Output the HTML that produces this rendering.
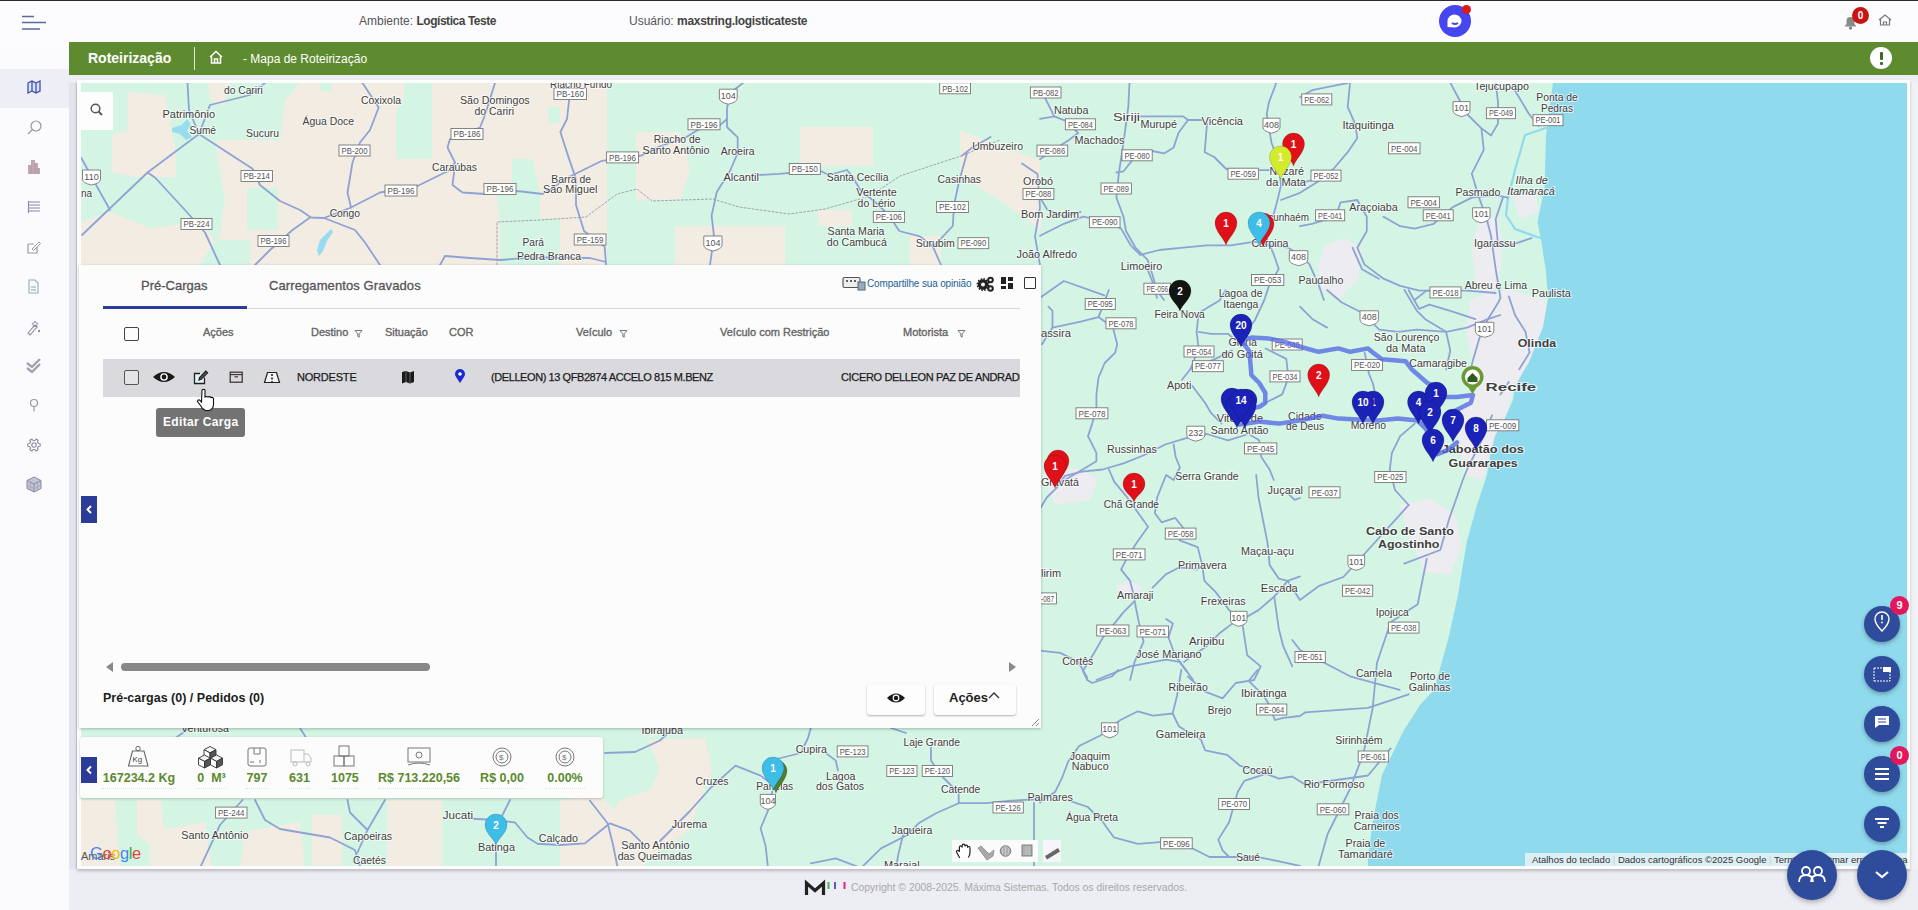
<!DOCTYPE html><html><head><meta charset="utf-8"><title>Mapa de Roteirização</title><style>
*{box-sizing:border-box;margin:0;padding:0}
html,body{width:1918px;height:910px;overflow:hidden;background:#f1f1f6;font-family:"Liberation Sans",sans-serif;position:relative}
.a{position:absolute}
.t{position:absolute;white-space:nowrap}
#top{left:0;top:0;width:1918px;height:42px;background:#fcfcfe;border-top:1px solid #2a2a33}
#side{left:0;top:42px;width:69px;height:868px;background:#fbfbfd}
#sideb{left:69px;top:75px;width:9px;height:835px;background:#e4e4ec}
#green{left:69px;top:42px;width:1849px;height:33px;background:#5f8b30}
#gap{left:69px;top:75px;width:1849px;height:8px;background:#eeedf4}
#mapframe{left:77px;top:80px;width:1833px;height:789px;background:#fdfdfd;box-shadow:0 2px 3px rgba(0,0,0,.22)}
#footer{left:69px;top:869px;width:1849px;height:41px;background:#ededf4}
svg{position:absolute;overflow:visible}
.lbl{font-family:"Liberation Sans",sans-serif;font-size:11.5px;fill:#404040;paint-order:stroke;stroke:#ffffffb0;stroke-width:2px}
.shd{font-family:"Liberation Sans",sans-serif;font-size:9px;fill:#555}
.pin{font-family:"Liberation Sans",sans-serif;font-size:10px;font-weight:bold;fill:#fff}
</style></head><body>
<div id="top" class="a">
<svg style="left:20px;top:0px" width="30" height="32"><path d="M2 15.5h12M2 21.5h24M2 28h18" stroke="#5a6a99" stroke-width="1.4" fill="none"/></svg>
<div class="t" style="left:359px;top:13px;font-size:12px;color:#555">Ambiente: <b style="color:#444;letter-spacing:-0.45px">Logística Teste</b></div>
<div class="t" style="left:629px;top:13px;font-size:12px;color:#555">Usuário: <b style="color:#444;letter-spacing:-0.3px">maxstring.logisticateste</b></div>
<div class="a" style="left:1439px;top:4px;width:32px;height:32px;border-radius:50%;background:#4646ee"></div>
<svg style="left:1446px;top:12px" width="18" height="16"><path d="M1.5 14 V8 a7 6.5 0 1 1 7 6.5 Z" fill="#fff"/><path d="M6 10 q3 2 6 0" stroke="#4646ee" stroke-width="2" fill="none"/></svg>
<div class="a" style="left:1462px;top:4px;width:9px;height:9px;border-radius:50%;background:#dd1a1a"></div>
<svg style="left:1843px;top:13px" width="16" height="16"><path d="M1.5 12.5 L3.5 10 V7 a4 4 0 0 1 8 0 V10 L13.5 12.5Z" fill="#8a8a8a"/><circle cx="7.5" cy="14" r="1.6" fill="#777"/></svg>
<div class="a" style="left:1852px;top:6px;width:17px;height:17px;border-radius:50%;background:#c81414;color:#fff;font-size:10px;font-weight:bold;text-align:center;line-height:17px">0</div>
<svg style="left:1878px;top:13px" width="14" height="12"><path d="M1 6 L7 1 L13 6 M2.5 5 V11 H11.5 V5 M5.5 11 V8 H8.5 V11" stroke="#777" stroke-width="1.2" fill="none"/></svg>
</div>
<div id="side" class="a"></div><div class="a" style="left:0;top:69px;width:69px;height:39px;background:#eeeef6"></div>
<div id="sideb" class="a"></div><div class="a" style="left:76px;top:83px;width:1px;height:827px;background:#d0d0dc"></div>
<svg style="left:0;top:0" width="69" height="520"><path d="M28 83 l4 -2 l4 2 l4 -2 v10 l-4 2 l-4 -2 l-4 2z M32 81 v10 M36 83 v10" stroke="#4b4bb0" stroke-width="1.3" fill="#cfe8f6"/><circle cx="36" cy="126" r="5" stroke="#9a9a9a" stroke-width="1.2" fill="none"/><path d="M32.5 129.5 L28 134" stroke="#9a9a9a" stroke-width="1.3"/><path d="M28 174 v-9 h3 v-5 h4 v3 h3 v5 h2 v6z" fill="#bfa8b0"/><path d="M31 165v9M35 163v11M38 168v6" stroke="#a89098" stroke-width="0.6"/><path d="M28 202h12M28 205h12M28 208h12M28 211h12M28.5 201v12" stroke="#8888aa" stroke-width="1.1"/><path d="M28 244 h6 M28 244 v9 h9 v-6" stroke="#9a9aaa" stroke-width="1.2" fill="none"/><path d="M32 249 l7 -7 l1.5 1.5 l-7 7z" stroke="#9a9aaa" stroke-width="1" fill="none"/><path d="M29 280 h6 l3 3 v10 h-9z" stroke="#9aaab0" stroke-width="1.1" fill="none"/><path d="M31 287 h5 M31 290 h5" stroke="#7ab" stroke-width="1"/><path d="M28 333 l7 -8 l2 2 l-7 8z" stroke="#8a8aa0" stroke-width="1.1" fill="none"/><path d="M35 321 l1 2 l2 0.5 l-1.5 1.5 l0.3 2 l-1.8 -1 l-1.8 1 l0.3 -2 l-1.5 -1.5 l2 -0.5z" stroke="#8a8aa0" stroke-width="0.9" fill="none"/><circle cx="39" cy="331" r="1.2" fill="#a08aa0"/><path d="M27 363 l5 4 l8 -8 M27 368 l5 4 l8 -8" stroke="#a0a0b0" stroke-width="2.4" fill="none"/><circle cx="34" cy="403" r="3.5" stroke="#999" stroke-width="1.2" fill="none"/><path d="M34 406.5 v5" stroke="#999" stroke-width="1.2"/><path d="M38.37 443.55 L40.17 443.75 L40.17 446.25 L38.37 446.45 L37.44 448.06 L38.17 449.72 L36.00 450.97 L34.93 449.50 L33.07 449.50 L32.00 450.97 L29.83 449.72 L30.56 448.06 L29.63 446.45 L27.83 446.25 L27.83 443.75 L29.63 443.55 L30.56 441.94 L29.83 440.28 L32.00 439.03 L33.07 440.50 L34.93 440.50 L36.00 439.03 L38.17 440.28 L37.44 441.94Z" stroke="#8a8aa0" stroke-width="1.1" fill="none" stroke-linejoin="round"/><circle cx="34" cy="445" r="2.2" stroke="#8a8aa0" stroke-width="1.1" fill="none"/><path d="M34 477 l7 3.5 v8 l-7 3.5 l-7 -3.5 v-8z" fill="#c4c4d4" stroke="#8888a4" stroke-width="1"/><path d="M27 480.5 l7 3.5 l7 -3.5 M34 484 v8" stroke="#8888a4" stroke-width="1" fill="none"/><path d="M30.5 482.3v8M37.5 482.3v8M27 485l7 3.5l7 -3.5" stroke="#9a9ab4" stroke-width="0.6" fill="none"/></svg>
<div id="green" class="a">
<div class="t" style="left:19px;top:8px;font-size:14px;font-weight:bold;color:#fff">Roteirização</div>
<div class="a" style="left:125px;top:5px;width:1px;height:23px;background:#dfe8d0"></div>
<svg style="left:140px;top:8px" width="14" height="14"><path d="M1 7 L7 1.5 L13 7 M2.5 6 V13 H11.5 V6 M5.5 13 V9 H8.5 V13" stroke="#fff" stroke-width="1.5" fill="none"/></svg>
<div class="t" style="left:174px;top:10px;font-size:12px;color:#fff">- Mapa de Roteirização</div>
<div class="a" style="left:1801px;top:5px;width:22px;height:22px;border-radius:50%;background:#fff"></div>
<div class="a" style="left:1810.5px;top:10px;width:3px;height:8px;background:#3c6a2a;border-radius:1px"></div>
<div class="a" style="left:1810.5px;top:19.5px;width:3px;height:3px;background:#3c6a2a;border-radius:1px"></div>
</div>
<div id="gap" class="a"></div><div id="footer" class="a"></div><div id="mapframe" class="a"></div>
<div class="a" style="left:81px;top:83px;width:1826px;height:783px;overflow:hidden">
<svg style="left:0;top:0" width="1826" height="783" viewBox="81 83 1826 783"><rect x="81" y="83" width="1826" height="783" fill="#d4f5e4"/><path d="M81 800 L115 800 L120 868 L81 868 Z" fill="#f3ece2" /><path d="M137 800 L160 800 L165 830 L150 845 L137 835 Z" fill="#f3ece2" /><path d="M150 832 L205 822 L212 868 L150 868 Z" fill="#f3ece2" /><path d="M245 832 L300 822 L305 868 L240 868 Z" fill="#f3ece2" /><path d="M312 815 L342 815 L342 865 L312 865 Z" fill="#f3ece2" /><path d="M387 800 L442 800 L442 868 L387 868 Z" fill="#f3ece2" /><path d="M648 740 L705 738 L712 770 L700 800 L690 830 L660 850 L640 868 L610 868 L600 830 L620 800 L650 790 L660 770 Z" fill="#f3ece2" /><path d="M560 800 L600 796 L625 820 L635 868 L560 868 Z" fill="#f3ece2" /><path d="M128 92 L165 95 L176 150 L176 177 L134 177 L112 173 L112 135 L128 130 Z" fill="#f3ece2" /><path d="M81 222 L110 212 L150 228 L200 222 L215 240 L200 265 L81 265 Z" fill="#f3ece2" /><path d="M208 83 L280 83 L275 105 L230 108 L210 100 Z" fill="#f3ece2" /><path d="M215 140 L280 140 L285 100 L300 83 L607 83 L607 265 L215 265 L225 200 Z" fill="#f3ece2" /><path d="M636 132 L680 132 L690 170 L680 200 L636 200 Z" fill="#f3ece2" /><path d="M675 226 L785 226 L785 265 L675 265 Z" fill="#f3ece2" /><path d="M800 127 L873 127 L873 166 L800 166 Z" fill="#f3ece2" /><path d="M818 210 L852 210 L852 226 L818 226 Z" fill="#f3ece2" /><path d="M910 236 L941 236 L941 265 L910 265 Z" fill="#f3ece2" /><path d="M960 130 L1010 150 L1040 160 L1041 230 L1000 200 L960 175 Z" fill="#f3ece2" /><path d="M404 83 L432 83 L432 159 L396 159 L396 109 L404 101 Z" fill="#d4f5e4" /><path d="M548 107 L560 107 L560 123 L548 123 Z" fill="#d4f5e4" /><path d="M512 159 L532 159 L540 191 L540 219 L560 219 L560 265 L500 265 L500 223 L496 191 L512 191 Z" fill="#d4f5e4" /><path d="M320 83 L332 83 L332 91 L320 91 Z" fill="#d4f5e4" /><path d="M247 188 L278 188 L278 230 L247 230 Z" fill="#d4f5e4" /><path d="M216 240 L250 240 L250 265 L216 265 Z" fill="#d4f5e4" /><path d="M230 83 L300 83 L285 100 L280 140 L215 140 Z" fill="#d4f5e4" /><path d="M1470 300 L1490 292 L1510 290 L1546 300 L1546 321 L1544 342 L1534 359 L1525 373 L1515 384 L1509 405 L1507 419 L1500 436 L1492 457 L1482 480 L1465 475 L1458 440 L1462 410 L1470 395 L1472 360 L1466 330 Z" fill="#ececf1" /><path d="M1325 245 L1345 238 L1362 250 L1358 280 L1340 298 L1322 290 L1318 265 Z" fill="#ececf1" /><path d="M1478 225 L1496 215 L1503 240 L1500 275 L1490 298 L1476 285 L1472 250 Z" fill="#ececf1" /><path d="M1512 195 L1535 192 L1538 212 L1520 218 Z" fill="#ececf1" /><path d="M1400 505 L1430 498 L1455 515 L1462 545 L1450 575 L1425 572 L1410 540 Z" fill="#ececf1" /><path d="M1042 472 L1075 468 L1098 478 L1090 500 L1055 505 Z" fill="#ececf1" /><path d="M1116 585 L1130 581 L1143 587 L1138 595 L1118 595 Z" fill="#ececf1" /><path d="M1553 83 L1546 135 L1544.5 188 L1537.5 222 L1541 240 L1546 271 L1548 299 L1543 327 L1529 362 L1515 386 L1513 400 L1504 420 L1495 436 L1490 455 L1487 475 L1477 505 L1467 541 L1462 570 L1458 595 L1448 640 L1434 690 L1420 705 L1404 730 L1382 775 L1373 820 L1368 857 L1368 866 L1907 866 L1907 83 Z" fill="#90daee" /><path d="M1546 128 L1525 135 L1515 170 L1508 198 L1506 215 L1515 229 L1540 238" fill="none" stroke="#90daee" stroke-width="2.2" stroke-linejoin="round" stroke-linecap="round" /><path d="M82 235 L147.5 172.5 L199 134" fill="none" stroke="#8ea3d4" stroke-width="1.8" stroke-linejoin="round" stroke-linecap="round" /><path d="M199 134 L252.5 168.7 L260 185 L280 201 L300 210 L311 217.5 L324 218 L351 207.5" fill="none" stroke="#8ea3d4" stroke-width="1.8" stroke-linejoin="round" stroke-linecap="round" /><path d="M147.5 172.5 L155 177.5 L185 210 L205 232.5 L220 265" fill="none" stroke="#8ea3d4" stroke-width="1.8" stroke-linejoin="round" stroke-linecap="round" /><path d="M81 157.5 L97.5 187.5 L110 210" fill="none" stroke="#8ea3d4" stroke-width="1.8" stroke-linejoin="round" stroke-linecap="round" /><path d="M187.5 83 L189 110 L199 134" fill="none" stroke="#8ea3d4" stroke-width="1.8" stroke-linejoin="round" stroke-linecap="round" /><path d="M199 134 L210 105 L230 100 L250 95 L265 83" fill="none" stroke="#8ea3d4" stroke-width="1.8" stroke-linejoin="round" stroke-linecap="round" /><path d="M362.5 83 L378.7 107.5 L370 130 L360 142.5 L352.5 162.5 L347.5 192.5 L351 207.5" fill="none" stroke="#8ea3d4" stroke-width="1.8" stroke-linejoin="round" stroke-linecap="round" /><path d="M351 207.5 L380 192.5 L417.5 186 L450 170 L455 162.5" fill="none" stroke="#8ea3d4" stroke-width="1.8" stroke-linejoin="round" stroke-linecap="round" /><path d="M455 162.5 L447.5 147.5 L450 139 L480 127.5 L485 115 L495 83" fill="none" stroke="#8ea3d4" stroke-width="1.8" stroke-linejoin="round" stroke-linecap="round" /><path d="M455 165 L452.5 185 L462.5 192.5 L485 194 L517.5 191 L542.5 194 L570 176.5" fill="none" stroke="#8ea3d4" stroke-width="1.8" stroke-linejoin="round" stroke-linecap="round" /><path d="M324 218 L355 230 L365 242.5 L380 265" fill="none" stroke="#8ea3d4" stroke-width="1.8" stroke-linejoin="round" stroke-linecap="round" /><path d="M310 217.5 L292.5 230 L270 250 L255 265" fill="none" stroke="#8ea3d4" stroke-width="1.8" stroke-linejoin="round" stroke-linecap="round" /><path d="M440 265 L445 256 L470 258 L500 260 L517.5 258.7 L542.5 257.5 L590 258 L606 262" fill="none" stroke="#8ea3d4" stroke-width="1.8" stroke-linejoin="round" stroke-linecap="round" /><path d="M571 83 L567 119 L560.4 132 L568 155.6 L576 179 L576 205 L584 231 L604.7 246.8 L606 265" fill="none" stroke="#8ea3d4" stroke-width="1.8" stroke-linejoin="round" stroke-linecap="round" /><path d="M570 176.5 L602 160.8 L641 155.6 L659.5 146.5 L685.6 137.4 L698.6 129.5 L719.5 125.6 L727 119" fill="none" stroke="#8ea3d4" stroke-width="1.8" stroke-linejoin="round" stroke-linecap="round" /><path d="M743 83 L730 93 L727 108.7 L727 127 L737.7 137.4 L737.7 153 L730 171 L716.8 192 L711.6 215.6 L714 236.4 L710 265" fill="none" stroke="#8ea3d4" stroke-width="1.8" stroke-linejoin="round" stroke-linecap="round" /><path d="M758.5 175 L779.4 173.8 L818.5 170 L829 175 L847 170 L852.4 176.5 L860 189.5 L878.5 205 L889 215.6 L899.3 231 L920 236.4 L933 246.8 L941 265" fill="none" stroke="#8ea3d4" stroke-width="1.8" stroke-linejoin="round" stroke-linecap="round" /><path d="M967 153 L959 181.7 L954 205 L952.8 226 L933 246.8" fill="none" stroke="#8ea3d4" stroke-width="1.8" stroke-linejoin="round" stroke-linecap="round" /><path d="M962 155.6 L972 147.8 L990.6 137" fill="none" stroke="#8ea3d4" stroke-width="1.8" stroke-linejoin="round" stroke-linecap="round" /><path d="M1022 163.4 L1037.5 174 L1040 207.7 L1035 236.4 L1040 265" fill="none" stroke="#8ea3d4" stroke-width="1.8" stroke-linejoin="round" stroke-linecap="round" /><path d="M242.5 800 L220 825 L200 868" fill="none" stroke="#8ea3d4" stroke-width="1.8" stroke-linejoin="round" stroke-linecap="round" /><path d="M255 800 L265 820 L280 829 L330 837.5 L355 850 L360 866" fill="none" stroke="#8ea3d4" stroke-width="1.8" stroke-linejoin="round" stroke-linecap="round" /><path d="M347.5 800 L350 812.5 L367.5 830 L385 800" fill="none" stroke="#8ea3d4" stroke-width="1.8" stroke-linejoin="round" stroke-linecap="round" /><path d="M367.5 830 L357.5 852.5" fill="none" stroke="#8ea3d4" stroke-width="1.8" stroke-linejoin="round" stroke-linecap="round" /><path d="M510 800 L502.5 815" fill="none" stroke="#8ea3d4" stroke-width="1.8" stroke-linejoin="round" stroke-linecap="round" /><path d="M472.5 818.75 L496 820 L515 822.5 L527.5 837.5 L537.5 843.75 L560 845 L585 843.3 L610 823.3 L630 830.8 L645 845.8" fill="none" stroke="#8ea3d4" stroke-width="1.8" stroke-linejoin="round" stroke-linecap="round" /><path d="M496 845 L496 868" fill="none" stroke="#8ea3d4" stroke-width="1.8" stroke-linejoin="round" stroke-linecap="round" /><path d="M81 780 L120 760 L165 745 L190 728" fill="none" stroke="#8ea3d4" stroke-width="1.8" stroke-linejoin="round" stroke-linecap="round" /><path d="M300 728 L320 760 L345 790" fill="none" stroke="#8ea3d4" stroke-width="1.8" stroke-linejoin="round" stroke-linecap="round" /><path d="M605 753 L635 752 L660 740.5 L673 728" fill="none" stroke="#8ea3d4" stroke-width="1.8" stroke-linejoin="round" stroke-linecap="round" /><path d="M660 841 L690 811 L710.5 788 L735.5 765.6 L760.6 775.6 L773 785" fill="none" stroke="#8ea3d4" stroke-width="1.8" stroke-linejoin="round" stroke-linecap="round" /><path d="M773 760 L780.7 758 L800.7 753 L808 738 L810.8 728" fill="none" stroke="#8ea3d4" stroke-width="1.8" stroke-linejoin="round" stroke-linecap="round" /><path d="M825.8 753 L835.8 760.6 L838 770.6" fill="none" stroke="#8ea3d4" stroke-width="1.8" stroke-linejoin="round" stroke-linecap="round" /><path d="M773 788 L768 810.7 L760.6 828.3 L765.6 845.8 L768 868" fill="none" stroke="#8ea3d4" stroke-width="1.8" stroke-linejoin="round" stroke-linecap="round" /><path d="M590 800.7 L607.6 823.3 L612.7 843.3 L617.7 868" fill="none" stroke="#8ea3d4" stroke-width="1.8" stroke-linejoin="round" stroke-linecap="round" /><path d="M861 868 L881 848.4 L906 835.8 L918.6 823.3 L936 813.3 L958.7 803.2 L986.3 803.2 L1011.3 800.7 L1041 799" fill="none" stroke="#8ea3d4" stroke-width="1.8" stroke-linejoin="round" stroke-linecap="round" /><path d="M958.7 803 L958.7 793 L943.6 778 L936 768 L931 760.6 L931 748" fill="none" stroke="#8ea3d4" stroke-width="1.8" stroke-linejoin="round" stroke-linecap="round" /><path d="M1034 803 L1034 868" fill="none" stroke="#8ea3d4" stroke-width="1.8" stroke-linejoin="round" stroke-linecap="round" /><path d="M891 728 L906 733" fill="none" stroke="#8ea3d4" stroke-width="1.8" stroke-linejoin="round" stroke-linecap="round" /><path d="M810.8 863.4 L835.8 858.4 L861 868" fill="none" stroke="#8ea3d4" stroke-width="1.8" stroke-linejoin="round" stroke-linecap="round" /><path d="M903.5 833.3 L898.5 853.4 L896 868" fill="none" stroke="#8ea3d4" stroke-width="1.8" stroke-linejoin="round" stroke-linecap="round" /><path d="M1129.5 83 L1128.3 106.9 L1123.5 142.7 L1118.8 173.7 L1116.4 197.6 L1123.5 216.7 L1126 231 L1135.5 247.7 L1147.4 259.6 L1152.2 274 L1157 290.6 L1164 300" fill="none" stroke="#8ea3d4" stroke-width="1.8" stroke-linejoin="round" stroke-linecap="round" /><path d="M1135.5 116.4 L1183.2 116.4 L1188 120 L1202.3 120" fill="none" stroke="#8ea3d4" stroke-width="1.8" stroke-linejoin="round" stroke-linecap="round" /><path d="M1188 120 L1178.4 133 L1173.7 147.4 L1164 153.4 L1152.2 151 L1123.5 151" fill="none" stroke="#8ea3d4" stroke-width="1.8" stroke-linejoin="round" stroke-linecap="round" /><path d="M1133 159.4 L1123.5 171.3 L1116.4 172.5" fill="none" stroke="#8ea3d4" stroke-width="1.8" stroke-linejoin="round" stroke-linecap="round" /><path d="M1207 123.6 L1204.7 152.2 L1214.2 157 L1226.2 169 L1254.8 170.1 L1269 170.1" fill="none" stroke="#8ea3d4" stroke-width="1.8" stroke-linejoin="round" stroke-linecap="round" /><path d="M1276.3 83 L1269 102 L1266.7 114 L1271.5 142.7 L1278.7 161.8 L1281 185.6 L1276.3 204.7 L1271.5 221.4 L1266.7 238 L1273.9 254.8 L1278.7 269 L1269 285.9 L1264.3 300 L1255 320 L1240 340" fill="none" stroke="#8ea3d4" stroke-width="1.8" stroke-linejoin="round" stroke-linecap="round" /><path d="M1281 200 L1300 192.8 L1319 180.9" fill="none" stroke="#8ea3d4" stroke-width="1.8" stroke-linejoin="round" stroke-linecap="round" /><path d="M1140.2 254.8 L1159.3 250 L1183.2 247.7 L1207 245.3 L1231 245.3 L1254.8 241.7 L1269 245.3 L1288.2 247.7 L1300 254.8 L1309.5 264.4 L1319 285.9 L1323.9 300" fill="none" stroke="#8ea3d4" stroke-width="1.8" stroke-linejoin="round" stroke-linecap="round" /><path d="M1040 235.7 L1063.9 223.8 L1083 216.7 L1106.8 221.4 L1121.1 228.6 L1130.7 245.3 L1140.2 254.8" fill="none" stroke="#8ea3d4" stroke-width="1.8" stroke-linejoin="round" stroke-linecap="round" /><path d="M1040 118.8 L1054.3 116.4 L1066.3 121.2 L1078.2 133 L1068.6 140.3 L1049.5 152.2 L1040 159.4" fill="none" stroke="#8ea3d4" stroke-width="1.8" stroke-linejoin="round" stroke-linecap="round" /><path d="M1044.8 97.3 L1049.5 106.9 L1054.3 116.4" fill="none" stroke="#8ea3d4" stroke-width="1.8" stroke-linejoin="round" stroke-linecap="round" /><path d="M1040 197.6 L1047.2 209.5 L1063.9 216.7 L1080.6 211.9" fill="none" stroke="#8ea3d4" stroke-width="1.8" stroke-linejoin="round" stroke-linecap="round" /><path d="M1147.4 269.2 L1152.2 281 L1157 297.8" fill="none" stroke="#8ea3d4" stroke-width="1.8" stroke-linejoin="round" stroke-linecap="round" /><path d="M1040 297.8 L1063.9 281 L1104.4 295.4" fill="none" stroke="#8ea3d4" stroke-width="1.8" stroke-linejoin="round" stroke-linecap="round" /><path d="M1350 83 L1347.7 106.9 L1355 123.6 L1357.3 137.9 L1347.7 152.2 L1333.4 169 L1319 178.5 L1300 183.2" fill="none" stroke="#8ea3d4" stroke-width="1.8" stroke-linejoin="round" stroke-linecap="round" /><path d="M1300 97.3 L1312 90.2 L1335.8 85.4 L1347.7 83" fill="none" stroke="#8ea3d4" stroke-width="1.8" stroke-linejoin="round" stroke-linecap="round" /><path d="M1300 226.2 L1312 223.8 L1335.8 216.7 L1340.6 202.3 L1357.3 200 L1366.8 216.7 L1366.8 231 L1357.3 247.7 L1364.4 264.4 L1383.5 278.7 L1400.2 285.9 L1419.3 290.6 L1433.7 290.6" fill="none" stroke="#8ea3d4" stroke-width="1.8" stroke-linejoin="round" stroke-linecap="round" /><path d="M1383.5 216.7 L1400.2 226.2 L1414.6 228.6 L1433.7 223.8 L1452.7 207.1 L1471.8 197.6 L1495.7 195.2 L1507.6 197.6" fill="none" stroke="#8ea3d4" stroke-width="1.8" stroke-linejoin="round" stroke-linecap="round" /><path d="M1450.4 83 L1467 114 L1481.4 128.3 L1483.8 149.8 L1471.8 173.7 L1479 197.6 L1486.2 216.7 L1491 235.7 L1495.7 269.2 L1500.5 297.8 L1498.3 302.5 L1487.9 319.2 L1479.5 338 L1473.3 358.9 L1467 384" fill="none" stroke="#8ea3d4" stroke-width="1.8" stroke-linejoin="round" stroke-linecap="round" /><path d="M1495.7 83 L1498 102 L1498 123.6 L1491 135.5 L1481.4 128.3" fill="none" stroke="#8ea3d4" stroke-width="1.8" stroke-linejoin="round" stroke-linecap="round" /><path d="M1514.8 90.2 L1529 114 L1538.7 126" fill="none" stroke="#8ea3d4" stroke-width="1.8" stroke-linejoin="round" stroke-linecap="round" /><path d="M1502.9 197.6 L1495.7 219 L1498 245.3 L1510 245.3 L1531.5 238.1" fill="none" stroke="#8ea3d4" stroke-width="1.8" stroke-linejoin="round" stroke-linecap="round" /><path d="M1352.5 247.7 L1362 269.2 L1378.8 278.7" fill="none" stroke="#8ea3d4" stroke-width="1.8" stroke-linejoin="round" stroke-linecap="round" /><path d="M1414.6 300 L1426.5 290.6 L1467 290.6 L1495.7 293" fill="none" stroke="#8ea3d4" stroke-width="1.8" stroke-linejoin="round" stroke-linecap="round" /><path d="M1042 344.3 L1052.5 327.6 L1052.5 310.9 L1048.4 306.7" fill="none" stroke="#8ea3d4" stroke-width="1.8" stroke-linejoin="round" stroke-linecap="round" /><path d="M1052.5 327.6 L1081.8 321.3 L1098.5 317.1 L1108.9 290" fill="none" stroke="#8ea3d4" stroke-width="1.8" stroke-linejoin="round" stroke-linecap="round" /><path d="M1098.5 317.1 L1113 327.6 L1117.2 344.3 L1115.2 352.6 L1104.7 363 L1098.5 377.7 L1096.4 394.4 L1096.4 406.9 L1092.2 423.6 L1088 436.1 L1096.4 452.8 L1096.4 461.2 L1075.5 473.7 L1065 480" fill="none" stroke="#8ea3d4" stroke-width="1.8" stroke-linejoin="round" stroke-linecap="round" /><path d="M1198.7 313 L1196.6 331.8 L1198.7 348.5 L1190.3 369.3 L1182 379.8" fill="none" stroke="#8ea3d4" stroke-width="1.8" stroke-linejoin="round" stroke-linecap="round" /><path d="M1192.4 386 L1205 402.7 L1211.2 413.2 L1221.6 423.6" fill="none" stroke="#8ea3d4" stroke-width="1.8" stroke-linejoin="round" stroke-linecap="round" /><path d="M1198.7 313 L1209 306.7 L1219.5 300.4 L1225.8 290" fill="none" stroke="#8ea3d4" stroke-width="1.8" stroke-linejoin="round" stroke-linecap="round" /><path d="M1198.7 331.8 L1211.2 333.8 L1227.9 333.8 L1240.4 344.3" fill="none" stroke="#8ea3d4" stroke-width="1.8" stroke-linejoin="round" stroke-linecap="round" /><path d="M1190.3 369.3 L1215.4 358.9 L1232 350.5" fill="none" stroke="#8ea3d4" stroke-width="1.8" stroke-linejoin="round" stroke-linecap="round" /><path d="M1265.5 348.5 L1286.3 358.9 L1288.4 377.7 L1282.2 394.4 L1273.8 398.6 L1265.5 402.7" fill="none" stroke="#8ea3d4" stroke-width="1.8" stroke-linejoin="round" stroke-linecap="round" /><path d="M1248.8 434 L1227.9 440.3 L1207 434 L1186.1 438.2 L1165.3 444.5 L1144.4 455 L1123.5 463.3 L1102.6 469.5 L1081.8 471.6 L1065 475.8 L1058 486.3 L1046.8 497.5 L1040 508.8" fill="none" stroke="#8ea3d4" stroke-width="1.8" stroke-linejoin="round" stroke-linecap="round" /><path d="M1248.8 434 L1259.2 440.3 L1261.3 457 L1269.6 469.5 L1273.8 480" fill="none" stroke="#8ea3d4" stroke-width="1.8" stroke-linejoin="round" stroke-linecap="round" /><path d="M1173.6 444.5 L1175.7 457 L1179.9 467.5 L1173.6 480 L1166.1 475 L1157.1 497.5 L1154.9 513.3 L1161.6 522.3 L1175.1 517.8 L1184.1 529 L1179.6 540.3 L1197.7 547.1 L1202.2 565.1 L1204.4 580.9 L1215.7 592.1 L1229.2 610.1 L1238.2 619.1" fill="none" stroke="#8ea3d4" stroke-width="1.8" stroke-linejoin="round" stroke-linecap="round" /><path d="M1108.9 469.5 L1114.3 481.8 L1125.6 495.3 L1136.8 511 L1148.1 526.8 L1136.8 542.6 L1125.6 560.6 L1121.1 569.6 L1130.1 580.9 L1134.6 598.9" fill="none" stroke="#8ea3d4" stroke-width="1.8" stroke-linejoin="round" stroke-linecap="round" /><path d="M1327 290 L1341.8 302.5 L1362.6 313 L1373 323.4 L1379.3 329.7 L1398.1 331.8 L1416.9 329.7 L1446.1 331.8 L1467 327.6 L1487.9 319.2 L1500.4 315" fill="none" stroke="#8ea3d4" stroke-width="1.8" stroke-linejoin="round" stroke-linecap="round" /><path d="M1408.6 290 L1419 308.8 L1429.4 304.6 L1450.3 310.9 L1475.4 319.2" fill="none" stroke="#8ea3d4" stroke-width="1.8" stroke-linejoin="round" stroke-linecap="round" /><path d="M1404.4 290 L1416.9 310.9 L1425.3 319.2 L1446.1 331.8 L1450.3 350.5 L1446.1 369.3" fill="none" stroke="#8ea3d4" stroke-width="1.8" stroke-linejoin="round" stroke-linecap="round" /><path d="M1508.8 296.3 L1515 315 L1525.5 331.8 L1529.6 352.6 L1519.2 369.3" fill="none" stroke="#8ea3d4" stroke-width="1.8" stroke-linejoin="round" stroke-linecap="round" /><path d="M1364.7 352.6 L1368.9 373.5 L1373 384 L1377.2 402.7" fill="none" stroke="#8ea3d4" stroke-width="1.8" stroke-linejoin="round" stroke-linecap="round" /><path d="M1414.8 423.6 L1400.2 436.1 L1391.9 452.8 L1389.8 469.5 L1395 490 L1408.7 505" fill="none" stroke="#8ea3d4" stroke-width="1.8" stroke-linejoin="round" stroke-linecap="round" /><path d="M1300 306.7 L1312.5 319.2 L1327.1 327.6" fill="none" stroke="#8ea3d4" stroke-width="1.8" stroke-linejoin="round" stroke-linecap="round" /><path d="M1492 415.3 L1483.7 436.1 L1467 469.5 L1462.8 480 L1449.3 518.6 L1440.3 550 L1404.2 563.6" fill="none" stroke="#8ea3d4" stroke-width="1.8" stroke-linejoin="round" stroke-linecap="round" /><path d="M1500.4 394.4 L1508.8 381.9" fill="none" stroke="#8ea3d4" stroke-width="1.8" stroke-linejoin="round" stroke-linecap="round" /><path d="M1152.6 587.6 L1166.1 574.1 L1179.6 567.3 L1197.7 569.6" fill="none" stroke="#8ea3d4" stroke-width="1.8" stroke-linejoin="round" stroke-linecap="round" /><path d="M1134.6 601.1 L1123.3 612.4 L1114.3 623.6 L1103.1 637.2 L1094.1 652.9 L1082.8 670.9 L1087.3 680 L1092.2 683 L1111.7 676.5 L1118.3 670" fill="none" stroke="#8ea3d4" stroke-width="1.8" stroke-linejoin="round" stroke-linecap="round" /><path d="M1134.6 601.1 L1139.1 623.6 L1143.6 641.7 L1134.6 661.9 L1130.1 680" fill="none" stroke="#8ea3d4" stroke-width="1.8" stroke-linejoin="round" stroke-linecap="round" /><path d="M1166.1 619.1 L1172.9 623.6 L1168.4 637.2 L1175.1 655.2 L1186.4 670.9 L1193.2 680" fill="none" stroke="#8ea3d4" stroke-width="1.8" stroke-linejoin="round" stroke-linecap="round" /><path d="M1238.2 619.1 L1220.2 632.7 L1206.7 646.2 L1193.2 655.2 L1184.1 661.9" fill="none" stroke="#8ea3d4" stroke-width="1.8" stroke-linejoin="round" stroke-linecap="round" /><path d="M1242.7 625.9 L1247.2 655.2 L1260.7 666.4 L1254 680 L1248.7 680.9" fill="none" stroke="#8ea3d4" stroke-width="1.8" stroke-linejoin="round" stroke-linecap="round" /><path d="M1242.7 619.1 L1258.5 610.1 L1274.2 596.6 L1287.7 580.9 L1300 576.4" fill="none" stroke="#8ea3d4" stroke-width="1.8" stroke-linejoin="round" stroke-linecap="round" /><path d="M1256.2 475 L1258.5 497.5 L1263 520 L1267.5 542.6 L1269.7 565.1 L1278.7 578.6 L1287.7 580.9" fill="none" stroke="#8ea3d4" stroke-width="1.8" stroke-linejoin="round" stroke-linecap="round" /><path d="M1274.2 596.6 L1278.7 628.2 L1283.2 646.2 L1292.3 666.4" fill="none" stroke="#8ea3d4" stroke-width="1.8" stroke-linejoin="round" stroke-linecap="round" /><path d="M1287.7 493 L1294.5 499.8 L1300 498" fill="none" stroke="#8ea3d4" stroke-width="1.8" stroke-linejoin="round" stroke-linecap="round" /><path d="M1040 650.7 L1060.3 652.9 L1078.3 661.9 L1087.3 677.7" fill="none" stroke="#8ea3d4" stroke-width="1.8" stroke-linejoin="round" stroke-linecap="round" /><path d="M1096.3 680 L1130.1 666.4 L1166.1 659.7 L1179.6 661.9 L1186.4 670.9" fill="none" stroke="#8ea3d4" stroke-width="1.8" stroke-linejoin="round" stroke-linecap="round" /><path d="M1040 802.6 L1055.2 791.7 L1061.7 778.7 L1068.3 761.3 L1079.1 746 L1100.9 735.2 L1120.4 720 L1137.8 711.3 L1153 715.7 L1172.6 713.5 L1177 696 L1181.3 670" fill="none" stroke="#8ea3d4" stroke-width="1.8" stroke-linejoin="round" stroke-linecap="round" /><path d="M1172.6 713.5 L1179.1 726.5 L1200.9 739.6 L1205.2 750.4 L1227 754.8 L1240 765.7 L1261.7 772.2 L1279.1 778.7 L1292.2 776.5 L1305 784.5 L1368 775.5 L1390.7 748.4" fill="none" stroke="#8ea3d4" stroke-width="1.8" stroke-linejoin="round" stroke-linecap="round" /><path d="M1264 774.3 L1244.3 780.9 L1237.8 791.7 L1229.1 822.2 L1218.3 839.6 L1222.6 850.4 L1229.1 857" fill="none" stroke="#8ea3d4" stroke-width="1.8" stroke-linejoin="round" stroke-linecap="round" /><path d="M1068.3 800.4 L1087.8 807 L1103 822.2 L1113.9 837.4 L1137.8 843.9 L1166.1 841.7 L1192.2 848.3 L1209.6 857 L1257.4 857 L1279.1 861.3 L1300 866" fill="none" stroke="#8ea3d4" stroke-width="1.8" stroke-linejoin="round" stroke-linecap="round" /><path d="M1187.8 676.5 L1205.2 691.7 L1222.6 698.3 L1235.7 683 L1248.7 680.9 L1257.4 670" fill="none" stroke="#8ea3d4" stroke-width="1.8" stroke-linejoin="round" stroke-linecap="round" /><path d="M1248.7 680.9 L1263.9 696 L1270.4 707 L1274.8 720 L1283.5 717.8 L1300 716 L1305 712.4 L1368 707.9 L1408.7 694.3" fill="none" stroke="#8ea3d4" stroke-width="1.8" stroke-linejoin="round" stroke-linecap="round" /><path d="M1408.7 505 L1368 550 L1343.4 577 L1318.6 586.2 L1300 600 L1287.7 580.9" fill="none" stroke="#8ea3d4" stroke-width="1.8" stroke-linejoin="round" stroke-linecap="round" /><path d="M1426.7 559 L1417.7 604.2 L1390.7 622.2 L1377 662.8 L1372.7 707.9 L1363.6 752.9 L1350 789 L1327.6 834 L1318.6 866" fill="none" stroke="#8ea3d4" stroke-width="1.8" stroke-linejoin="round" stroke-linecap="round" /><path d="M1292.3 640 L1300 650 L1350 676.3 L1399.7 689.8" fill="none" stroke="#8ea3d4" stroke-width="1.8" stroke-linejoin="round" stroke-linecap="round" /><path d="M497 265 L497 222 L540 220 L586 217 L617 194 L637 189 L652 201 L713 199 L739 207 L789 214 L825 209 L870 196 L900 176 L961 156 L1000 140" fill="none" stroke="#9a9aa8" stroke-width="0.9" stroke-linejoin="round" stroke-linecap="round" stroke-dasharray="2 2"/><path d="M172 128 L182 125 L187 119 L191 124 L187 131 L192 137 L186 140 L180 134 L172 132 Z" fill="#98dcef" /><path d="M317 250 L320 240 L326 234 L331 229 L333 232 L327 241 L323 251 L319 256 Z" fill="#98dcef" /><rect x="241" y="170.5" width="31.5" height="11" fill="#fff" stroke="#777" stroke-width="0.9"/><text x="256.75" y="179.2" text-anchor="middle" textLength="26.5" lengthAdjust="spacingAndGlyphs" class="shd">PB-214</text><rect x="339" y="145.0" width="31" height="11" fill="#fff" stroke="#777" stroke-width="0.9"/><text x="354.5" y="153.7" text-anchor="middle" textLength="26" lengthAdjust="spacingAndGlyphs" class="shd">PB-200</text><rect x="451" y="128.5" width="32" height="11" fill="#fff" stroke="#777" stroke-width="0.9"/><text x="467.0" y="137.2" text-anchor="middle" textLength="27" lengthAdjust="spacingAndGlyphs" class="shd">PB-186</text><rect x="385" y="185.0" width="32" height="11" fill="#fff" stroke="#777" stroke-width="0.9"/><text x="401.0" y="193.7" text-anchor="middle" textLength="27" lengthAdjust="spacingAndGlyphs" class="shd">PB-196</text><rect x="484" y="183.5" width="32" height="11" fill="#fff" stroke="#777" stroke-width="0.9"/><text x="500.0" y="192.2" text-anchor="middle" textLength="27" lengthAdjust="spacingAndGlyphs" class="shd">PB-196</text><rect x="181" y="218.5" width="31" height="11" fill="#fff" stroke="#777" stroke-width="0.9"/><text x="196.5" y="227.2" text-anchor="middle" textLength="26" lengthAdjust="spacingAndGlyphs" class="shd">PB-224</text><rect x="258" y="235.5" width="31" height="11" fill="#fff" stroke="#777" stroke-width="0.9"/><text x="273.5" y="244.2" text-anchor="middle" textLength="26" lengthAdjust="spacingAndGlyphs" class="shd">PB-196</text><rect x="554" y="88.5" width="32.5" height="11" fill="#fff" stroke="#777" stroke-width="0.9"/><text x="570.25" y="97.2" text-anchor="middle" textLength="27.5" lengthAdjust="spacingAndGlyphs" class="shd">PB-160</text><rect x="688" y="118.8" width="32" height="11" fill="#fff" stroke="#777" stroke-width="0.9"/><text x="704.0" y="127.5" text-anchor="middle" textLength="27" lengthAdjust="spacingAndGlyphs" class="shd">PB-196</text><rect x="606.6" y="151.9" width="32.0" height="11" fill="#fff" stroke="#777" stroke-width="0.9"/><text x="622.6" y="160.6" text-anchor="middle" textLength="27.0" lengthAdjust="spacingAndGlyphs" class="shd">PB-196</text><rect x="789.3" y="163.5" width="31.0" height="11" fill="#fff" stroke="#777" stroke-width="0.9"/><text x="804.8" y="172.2" text-anchor="middle" textLength="26.0" lengthAdjust="spacingAndGlyphs" class="shd">PB-150</text><rect x="939.7" y="82.8" width="30.799999999999955" height="11" fill="#fff" stroke="#777" stroke-width="0.9"/><text x="955.1" y="91.5" text-anchor="middle" textLength="25.799999999999955" lengthAdjust="spacingAndGlyphs" class="shd">PB-102</text><rect x="1030.4" y="87.0" width="30.59999999999991" height="11" fill="#fff" stroke="#777" stroke-width="0.9"/><text x="1045.7" y="95.7" text-anchor="middle" textLength="25.59999999999991" lengthAdjust="spacingAndGlyphs" class="shd">PB-082</text><rect x="936.6" y="201.5" width="31.799999999999955" height="11" fill="#fff" stroke="#777" stroke-width="0.9"/><text x="952.5" y="210.2" text-anchor="middle" textLength="26.799999999999955" lengthAdjust="spacingAndGlyphs" class="shd">PE-102</text><rect x="873.3" y="211.4" width="31.200000000000045" height="11" fill="#fff" stroke="#777" stroke-width="0.9"/><text x="888.9" y="220.1" text-anchor="middle" textLength="26.200000000000045" lengthAdjust="spacingAndGlyphs" class="shd">PE-106</text><rect x="574.2" y="234.0" width="31.799999999999955" height="11" fill="#fff" stroke="#777" stroke-width="0.9"/><text x="590.1" y="242.7" text-anchor="middle" textLength="26.799999999999955" lengthAdjust="spacingAndGlyphs" class="shd">PE-159</text><rect x="958" y="237.7" width="30.700000000000045" height="11" fill="#fff" stroke="#777" stroke-width="0.9"/><text x="973.35" y="246.39999999999998" text-anchor="middle" textLength="25.700000000000045" lengthAdjust="spacingAndGlyphs" class="shd">PE-090</text><rect x="1301.8" y="93.9" width="30.0" height="11" fill="#fff" stroke="#777" stroke-width="0.9"/><text x="1316.8" y="102.60000000000001" text-anchor="middle" textLength="25.0" lengthAdjust="spacingAndGlyphs" class="shd">PE-062</text><rect x="1486.4" y="107.7" width="29.09999999999991" height="11" fill="#fff" stroke="#777" stroke-width="0.9"/><text x="1500.95" y="116.4" text-anchor="middle" textLength="24.09999999999991" lengthAdjust="spacingAndGlyphs" class="shd">PE-049</text><rect x="1533" y="114.7" width="30" height="11" fill="#fff" stroke="#777" stroke-width="0.9"/><text x="1548.0" y="123.4" text-anchor="middle" textLength="25" lengthAdjust="spacingAndGlyphs" class="shd">PE-001</text><rect x="1065.4" y="118.8" width="30.0" height="11" fill="#fff" stroke="#777" stroke-width="0.9"/><text x="1080.4" y="127.5" text-anchor="middle" textLength="25.0" lengthAdjust="spacingAndGlyphs" class="shd">PE-084</text><rect x="1037" y="145.1" width="30.700000000000045" height="11" fill="#fff" stroke="#777" stroke-width="0.9"/><text x="1052.35" y="153.79999999999998" text-anchor="middle" textLength="25.700000000000045" lengthAdjust="spacingAndGlyphs" class="shd">PE-086</text><rect x="1122" y="149.8" width="30.200000000000045" height="11" fill="#fff" stroke="#777" stroke-width="0.9"/><text x="1137.1" y="158.5" text-anchor="middle" textLength="25.200000000000045" lengthAdjust="spacingAndGlyphs" class="shd">PE-080</text><rect x="1388.6" y="142.8" width="31.40000000000009" height="11" fill="#fff" stroke="#777" stroke-width="0.9"/><text x="1404.3" y="151.5" text-anchor="middle" textLength="26.40000000000009" lengthAdjust="spacingAndGlyphs" class="shd">PE-004</text><rect x="1228" y="168.2" width="30.40000000000009" height="11" fill="#fff" stroke="#777" stroke-width="0.9"/><text x="1243.2" y="176.89999999999998" text-anchor="middle" textLength="25.40000000000009" lengthAdjust="spacingAndGlyphs" class="shd">PE-059</text><rect x="1311" y="170.1" width="30" height="11" fill="#fff" stroke="#777" stroke-width="0.9"/><text x="1326.0" y="178.79999999999998" text-anchor="middle" textLength="25" lengthAdjust="spacingAndGlyphs" class="shd">PE-052</text><rect x="1101" y="183.0" width="30.40000000000009" height="11" fill="#fff" stroke="#777" stroke-width="0.9"/><text x="1116.2" y="191.7" text-anchor="middle" textLength="25.40000000000009" lengthAdjust="spacingAndGlyphs" class="shd">PE-089</text><rect x="1023" y="188.5" width="30.90000000000009" height="11" fill="#fff" stroke="#777" stroke-width="0.9"/><text x="1038.45" y="197.2" text-anchor="middle" textLength="25.90000000000009" lengthAdjust="spacingAndGlyphs" class="shd">PE-088</text><rect x="1089.4" y="216.7" width="30.59999999999991" height="11" fill="#fff" stroke="#777" stroke-width="0.9"/><text x="1104.7" y="225.39999999999998" text-anchor="middle" textLength="25.59999999999991" lengthAdjust="spacingAndGlyphs" class="shd">PE-090</text><rect x="1315.6" y="209.8" width="29.100000000000136" height="11" fill="#fff" stroke="#777" stroke-width="0.9"/><text x="1330.15" y="218.5" text-anchor="middle" textLength="24.100000000000136" lengthAdjust="spacingAndGlyphs" class="shd">PE-041</text><rect x="1408" y="196.8" width="31.40000000000009" height="11" fill="#fff" stroke="#777" stroke-width="0.9"/><text x="1423.7" y="205.5" text-anchor="middle" textLength="26.40000000000009" lengthAdjust="spacingAndGlyphs" class="shd">PE-004</text><rect x="1423.2" y="209.8" width="30.0" height="11" fill="#fff" stroke="#777" stroke-width="0.9"/><text x="1438.2" y="218.5" text-anchor="middle" textLength="25.0" lengthAdjust="spacingAndGlyphs" class="shd">PE-041</text><rect x="1251.5" y="274.5" width="32.299999999999955" height="11" fill="#fff" stroke="#777" stroke-width="0.9"/><text x="1267.65" y="283.2" text-anchor="middle" textLength="27.299999999999955" lengthAdjust="spacingAndGlyphs" class="shd">PE-053</text><rect x="1430" y="286.9" width="31" height="11" fill="#fff" stroke="#777" stroke-width="0.9"/><text x="1445.5" y="295.59999999999997" text-anchor="middle" textLength="26" lengthAdjust="spacingAndGlyphs" class="shd">PE-018</text><rect x="1143.9" y="283.2" width="26.799999999999955" height="11" fill="#fff" stroke="#777" stroke-width="0.9"/><text x="1157.3000000000002" y="291.9" text-anchor="middle" textLength="21.799999999999955" lengthAdjust="spacingAndGlyphs" class="shd">PE-056</text><rect x="1085.2" y="298.5" width="30.09999999999991" height="11" fill="#fff" stroke="#777" stroke-width="0.9"/><text x="1100.25" y="307.2" text-anchor="middle" textLength="25.09999999999991" lengthAdjust="spacingAndGlyphs" class="shd">PE-095</text><rect x="1106" y="317.8" width="30" height="11" fill="#fff" stroke="#777" stroke-width="0.9"/><text x="1121.0" y="326.5" text-anchor="middle" textLength="25" lengthAdjust="spacingAndGlyphs" class="shd">PE-078</text><rect x="1184" y="346.0" width="30" height="11" fill="#fff" stroke="#777" stroke-width="0.9"/><text x="1199.0" y="354.7" text-anchor="middle" textLength="25" lengthAdjust="spacingAndGlyphs" class="shd">PE-054</text><rect x="1272.2" y="339.0" width="30.0" height="11" fill="#fff" stroke="#777" stroke-width="0.9"/><text x="1287.2" y="347.7" text-anchor="middle" textLength="25.0" lengthAdjust="spacingAndGlyphs" class="shd">PE-040</text><rect x="1192.4" y="360.7" width="30.899999999999864" height="11" fill="#fff" stroke="#777" stroke-width="0.9"/><text x="1207.85" y="369.4" text-anchor="middle" textLength="25.899999999999864" lengthAdjust="spacingAndGlyphs" class="shd">PE-077</text><rect x="1270" y="370.9" width="30" height="11" fill="#fff" stroke="#777" stroke-width="0.9"/><text x="1285.0" y="379.59999999999997" text-anchor="middle" textLength="25" lengthAdjust="spacingAndGlyphs" class="shd">PE-034</text><rect x="1351.6" y="359.4" width="31.0" height="11" fill="#fff" stroke="#777" stroke-width="0.9"/><text x="1367.1" y="368.09999999999997" text-anchor="middle" textLength="26.0" lengthAdjust="spacingAndGlyphs" class="shd">PE-020</text><rect x="1076" y="407.8" width="31.90000000000009" height="11" fill="#fff" stroke="#777" stroke-width="0.9"/><text x="1091.95" y="416.5" text-anchor="middle" textLength="26.90000000000009" lengthAdjust="spacingAndGlyphs" class="shd">PE-078</text><rect x="1244.5" y="442.9" width="32.299999999999955" height="11" fill="#fff" stroke="#777" stroke-width="0.9"/><text x="1260.65" y="451.59999999999997" text-anchor="middle" textLength="27.299999999999955" lengthAdjust="spacingAndGlyphs" class="shd">PE-045</text><rect x="1486.4" y="419.8" width="32.399999999999864" height="11" fill="#fff" stroke="#777" stroke-width="0.9"/><text x="1502.6" y="428.5" text-anchor="middle" textLength="27.399999999999864" lengthAdjust="spacingAndGlyphs" class="shd">PE-009</text><rect x="1374.7" y="471.5" width="31.299999999999955" height="11" fill="#fff" stroke="#777" stroke-width="0.9"/><text x="1390.35" y="480.2" text-anchor="middle" textLength="26.299999999999955" lengthAdjust="spacingAndGlyphs" class="shd">PE-025</text><rect x="1309" y="486.8" width="31" height="11" fill="#fff" stroke="#777" stroke-width="0.9"/><text x="1324.5" y="495.5" text-anchor="middle" textLength="26" lengthAdjust="spacingAndGlyphs" class="shd">PE-037</text><rect x="1165.3" y="528.1" width="30.700000000000045" height="11" fill="#fff" stroke="#777" stroke-width="0.9"/><text x="1180.65" y="536.8000000000001" text-anchor="middle" textLength="25.700000000000045" lengthAdjust="spacingAndGlyphs" class="shd">PE-058</text><rect x="1113.3" y="548.9" width="31.700000000000045" height="11" fill="#fff" stroke="#777" stroke-width="0.9"/><text x="1129.15" y="557.6" text-anchor="middle" textLength="26.700000000000045" lengthAdjust="spacingAndGlyphs" class="shd">PE-071</text><rect x="1030" y="592.9" width="26.5" height="11" fill="#fff" stroke="#777" stroke-width="0.9"/><text x="1043.25" y="601.6" text-anchor="middle" textLength="21.5" lengthAdjust="spacingAndGlyphs" class="shd">PE-087</text><rect x="1096.7" y="625.0" width="32.200000000000045" height="11" fill="#fff" stroke="#777" stroke-width="0.9"/><text x="1112.8000000000002" y="633.7" text-anchor="middle" textLength="27.200000000000045" lengthAdjust="spacingAndGlyphs" class="shd">PE-063</text><rect x="1137" y="626.0" width="31.59999999999991" height="11" fill="#fff" stroke="#777" stroke-width="0.9"/><text x="1152.8" y="634.7" text-anchor="middle" textLength="26.59999999999991" lengthAdjust="spacingAndGlyphs" class="shd">PE-071</text><rect x="1256.5" y="704.0" width="30.299999999999955" height="11" fill="#fff" stroke="#777" stroke-width="0.9"/><text x="1271.65" y="712.7" text-anchor="middle" textLength="25.299999999999955" lengthAdjust="spacingAndGlyphs" class="shd">PE-064</text><rect x="1218.7" y="798.5" width="30.799999999999955" height="11" fill="#fff" stroke="#777" stroke-width="0.9"/><text x="1234.1" y="807.2" text-anchor="middle" textLength="25.799999999999955" lengthAdjust="spacingAndGlyphs" class="shd">PE-070</text><rect x="1160.6" y="837.8" width="31.600000000000136" height="11" fill="#fff" stroke="#777" stroke-width="0.9"/><text x="1176.4" y="846.5" text-anchor="middle" textLength="26.600000000000136" lengthAdjust="spacingAndGlyphs" class="shd">PE-096</text><rect x="1342.5" y="585.2" width="30.200000000000045" height="11" fill="#fff" stroke="#777" stroke-width="0.9"/><text x="1357.6" y="593.9000000000001" text-anchor="middle" textLength="25.200000000000045" lengthAdjust="spacingAndGlyphs" class="shd">PE-042</text><rect x="1388.4" y="622.1" width="30.59999999999991" height="11" fill="#fff" stroke="#777" stroke-width="0.9"/><text x="1403.7" y="630.8000000000001" text-anchor="middle" textLength="25.59999999999991" lengthAdjust="spacingAndGlyphs" class="shd">PE-038</text><rect x="1295" y="651.5" width="30.299999999999955" height="11" fill="#fff" stroke="#777" stroke-width="0.9"/><text x="1310.15" y="660.2" text-anchor="middle" textLength="25.299999999999955" lengthAdjust="spacingAndGlyphs" class="shd">PE-051</text><rect x="1358.2" y="751.0" width="30.200000000000045" height="11" fill="#fff" stroke="#777" stroke-width="0.9"/><text x="1373.3000000000002" y="759.7" text-anchor="middle" textLength="25.200000000000045" lengthAdjust="spacingAndGlyphs" class="shd">PE-061</text><rect x="1317.2" y="803.8" width="31.59999999999991" height="11" fill="#fff" stroke="#777" stroke-width="0.9"/><text x="1333.0" y="812.5" text-anchor="middle" textLength="26.59999999999991" lengthAdjust="spacingAndGlyphs" class="shd">PE-060</text><rect x="837.2" y="745.9" width="30.799999999999955" height="11" fill="#fff" stroke="#777" stroke-width="0.9"/><text x="852.6" y="754.6" text-anchor="middle" textLength="25.799999999999955" lengthAdjust="spacingAndGlyphs" class="shd">PE-123</text><rect x="886.8" y="765.5" width="30.200000000000045" height="11" fill="#fff" stroke="#777" stroke-width="0.9"/><text x="901.9" y="774.2" text-anchor="middle" textLength="25.200000000000045" lengthAdjust="spacingAndGlyphs" class="shd">PE-123</text><rect x="922.2" y="765.5" width="30.299999999999955" height="11" fill="#fff" stroke="#777" stroke-width="0.9"/><text x="937.35" y="774.2" text-anchor="middle" textLength="25.299999999999955" lengthAdjust="spacingAndGlyphs" class="shd">PE-120</text><rect x="993" y="802.0" width="30.299999999999955" height="11" fill="#fff" stroke="#777" stroke-width="0.9"/><text x="1008.15" y="810.7" text-anchor="middle" textLength="25.299999999999955" lengthAdjust="spacingAndGlyphs" class="shd">PE-126</text><rect x="215.6" y="807.1" width="31.400000000000006" height="11" fill="#fff" stroke="#777" stroke-width="0.9"/><text x="231.3" y="815.8000000000001" text-anchor="middle" textLength="26.400000000000006" lengthAdjust="spacingAndGlyphs" class="shd">PE-244</text><path d="M82.5 170 h18.0 v9 q0 4 -9.0 6 q-9.0 -2 -9.0 -6z" fill="#fff" stroke="#777" stroke-width="0.9"/><text x="91.5" y="179.5" text-anchor="middle" class="shd" font-size="8.5">110</text><path d="M719.4 89.2 h17.800000000000068 v9 q0 4 -8.900000000000034 6 q-8.900000000000034 -2 -8.900000000000034 -6z" fill="#fff" stroke="#777" stroke-width="0.9"/><text x="728.3" y="98.7" text-anchor="middle" class="shd" font-size="8.5">104</text><path d="M703.8 236 h18.200000000000045 v9 q0 4 -9.100000000000023 6 q-9.100000000000023 -2 -9.100000000000023 -6z" fill="#fff" stroke="#777" stroke-width="0.9"/><text x="712.9" y="245.5" text-anchor="middle" class="shd" font-size="8.5">104</text><path d="M1453 101.6 h17 v9 q0 4 -8.5 6 q-8.5 -2 -8.5 -6z" fill="#fff" stroke="#777" stroke-width="0.9"/><text x="1461.5" y="111.1" text-anchor="middle" class="shd" font-size="8.5">101</text><path d="M1263 118.2 h17 v9 q0 4 -8.5 6 q-8.5 -2 -8.5 -6z" fill="#fff" stroke="#777" stroke-width="0.9"/><text x="1271.5" y="127.7" text-anchor="middle" class="shd" font-size="8.5">408</text><path d="M1472.6 207.8 h17.40000000000009 v9 q0 4 -8.700000000000045 6 q-8.700000000000045 -2 -8.700000000000045 -6z" fill="#fff" stroke="#777" stroke-width="0.9"/><text x="1481.3" y="217.3" text-anchor="middle" class="shd" font-size="8.5">101</text><path d="M1289.3 250.7 h18.5 v9 q0 4 -9.25 6 q-9.25 -2 -9.25 -6z" fill="#fff" stroke="#777" stroke-width="0.9"/><text x="1298.55" y="260.2" text-anchor="middle" class="shd" font-size="8.5">408</text><path d="M1360 310.8 h18.40000000000009 v9 q0 4 -9.200000000000045 6 q-9.200000000000045 -2 -9.200000000000045 -6z" fill="#fff" stroke="#777" stroke-width="0.9"/><text x="1369.2" y="320.3" text-anchor="middle" class="shd" font-size="8.5">408</text><path d="M1475.4 322.3 h18.399999999999864 v9 q0 4 -9.199999999999932 6 q-9.199999999999932 -2 -9.199999999999932 -6z" fill="#fff" stroke="#777" stroke-width="0.9"/><text x="1484.6" y="331.8" text-anchor="middle" class="shd" font-size="8.5">101</text><path d="M1186.8 426.2 h18.0 v9 q0 4 -9.0 6 q-9.0 -2 -9.0 -6z" fill="#fff" stroke="#777" stroke-width="0.9"/><text x="1195.8" y="435.7" text-anchor="middle" class="shd" font-size="8.5">232</text><path d="M1230.5 611.3 h16.5 v9 q0 4 -8.25 6 q-8.25 -2 -8.25 -6z" fill="#fff" stroke="#777" stroke-width="0.9"/><text x="1238.75" y="620.8" text-anchor="middle" class="shd" font-size="8.5">101</text><path d="M1101.5 722.8 h16.5 v9 q0 4 -8.25 6 q-8.25 -2 -8.25 -6z" fill="#fff" stroke="#777" stroke-width="0.9"/><text x="1109.75" y="732.3" text-anchor="middle" class="shd" font-size="8.5">101</text><path d="M1347.9 555.3 h16.699999999999818 v9 q0 4 -8.349999999999909 6 q-8.349999999999909 -2 -8.349999999999909 -6z" fill="#fff" stroke="#777" stroke-width="0.9"/><text x="1356.25" y="564.8" text-anchor="middle" class="shd" font-size="8.5">101</text><path d="M760.3 794.4 h15.200000000000045 v9 q0 4 -7.600000000000023 6 q-7.600000000000023 -2 -7.600000000000023 -6z" fill="#fff" stroke="#777" stroke-width="0.9"/><text x="767.9" y="803.9" text-anchor="middle" class="shd" font-size="8.5">104</text><text x="224" y="94.1" textLength="38.7" lengthAdjust="spacingAndGlyphs" class="lbl" font-size="11.5" >do Cariri</text><text x="162.5" y="118.1" textLength="52.5" lengthAdjust="spacingAndGlyphs" class="lbl" font-size="11.5" >Patrimônio</text><text x="189.5" y="133.6" textLength="26.5" lengthAdjust="spacingAndGlyphs" class="lbl" font-size="11.5" >Sumé</text><text x="246" y="136.6" textLength="33.0" lengthAdjust="spacingAndGlyphs" class="lbl" font-size="11.5" >Sucuru</text><text x="302.5" y="124.6" textLength="51.5" lengthAdjust="spacingAndGlyphs" class="lbl" font-size="11.5" >Água Doce</text><text x="361" y="104.1" textLength="40.0" lengthAdjust="spacingAndGlyphs" class="lbl" font-size="11.5" >Coxixola</text><text x="460" y="104.1" textLength="69.6" lengthAdjust="spacingAndGlyphs" class="lbl" font-size="11.5" >São Domingos</text><text x="474.5" y="114.6" textLength="39.5" lengthAdjust="spacingAndGlyphs" class="lbl" font-size="11.5" >do Cariri</text><text x="432" y="170.9" textLength="45.0" lengthAdjust="spacingAndGlyphs" class="lbl" font-size="11.5" >Caraúbas</text><text x="329.7" y="216.7" textLength="30.3" lengthAdjust="spacingAndGlyphs" class="lbl" font-size="11.5" >Congo</text><text x="522.5" y="246.1" textLength="21.5" lengthAdjust="spacingAndGlyphs" class="lbl" font-size="11.5" >Pará</text><text x="517" y="259.6" textLength="64.0" lengthAdjust="spacingAndGlyphs" class="lbl" font-size="11.5" >Pedra Branca</text><text x="81" y="197.1" textLength="11.0" lengthAdjust="spacingAndGlyphs" class="lbl" font-size="11.5" >na</text><text x="550" y="88.1" textLength="62.0" lengthAdjust="spacingAndGlyphs" class="lbl" font-size="11.5" >Riacho Fundo</text><text x="653.8" y="142.8" textLength="46.6" lengthAdjust="spacingAndGlyphs" class="lbl" font-size="11.5" >Riacho de</text><text x="642.5" y="153.7" textLength="67.0" lengthAdjust="spacingAndGlyphs" class="lbl" font-size="11.5" >Santo Antônio</text><text x="720.8" y="155.3" textLength="33.8" lengthAdjust="spacingAndGlyphs" class="lbl" font-size="11.5" >Aroeira</text><text x="551.3" y="182.6" textLength="39.7" lengthAdjust="spacingAndGlyphs" class="lbl" font-size="11.5" >Barra de</text><text x="543" y="193.1" textLength="54.4" lengthAdjust="spacingAndGlyphs" class="lbl" font-size="11.5" >São Miguel</text><text x="723.4" y="181.3" textLength="35.6" lengthAdjust="spacingAndGlyphs" class="lbl" font-size="11.5" >Alcantil</text><text x="826.8" y="181.3" textLength="61.6" lengthAdjust="spacingAndGlyphs" class="lbl" font-size="11.5" >Santa Cecília</text><text x="856.3" y="196.1" textLength="40.4" lengthAdjust="spacingAndGlyphs" class="lbl" font-size="11.5" >Vertente</text><text x="857.6" y="206.6" textLength="37.8" lengthAdjust="spacingAndGlyphs" class="lbl" font-size="11.5" >do Lério</text><text x="972.3" y="150.1" textLength="50.7" lengthAdjust="spacingAndGlyphs" class="lbl" font-size="11.5" >Umbuzeiro</text><text x="937.6" y="182.6" textLength="43.4" lengthAdjust="spacingAndGlyphs" class="lbl" font-size="11.5" >Casinhas</text><text x="1023" y="185.1" textLength="30.0" lengthAdjust="spacingAndGlyphs" class="lbl" font-size="11.5" >Orobó</text><text x="1021" y="218.4" textLength="58.0" lengthAdjust="spacingAndGlyphs" class="lbl" font-size="11.5" >Bom Jardim</text><text x="827.6" y="235.3" textLength="56.9" lengthAdjust="spacingAndGlyphs" class="lbl" font-size="11.5" >Santa Maria</text><text x="826.8" y="246.1" textLength="60.0" lengthAdjust="spacingAndGlyphs" class="lbl" font-size="11.5" >do Cambucá</text><text x="915.7" y="246.5" textLength="39.1" lengthAdjust="spacingAndGlyphs" class="lbl" font-size="11.5" >Surubim</text><text x="1016.6" y="258.1" textLength="60.4" lengthAdjust="spacingAndGlyphs" class="lbl" font-size="11.5" >João Alfredo</text><text x="1053.9" y="114.1" textLength="34.6" lengthAdjust="spacingAndGlyphs" class="lbl" font-size="11.5" >Natuba</text><text x="1113" y="121.1" textLength="27.0" lengthAdjust="spacingAndGlyphs" class="lbl" font-size="11.5" >Siriji</text><text x="1140.6" y="128.0" textLength="36.4" lengthAdjust="spacingAndGlyphs" class="lbl" font-size="11.5" >Murupé</text><text x="1201.6" y="124.7" textLength="41.4" lengthAdjust="spacingAndGlyphs" class="lbl" font-size="11.5" >Vicência</text><text x="1342.4" y="129.3" textLength="51.6" lengthAdjust="spacingAndGlyphs" class="lbl" font-size="11.5" >Itaquitinga</text><text x="1074.6" y="144.1" textLength="49.9" lengthAdjust="spacingAndGlyphs" class="lbl" font-size="11.5" >Machados</text><text x="1269.5" y="175.1" textLength="34.5" lengthAdjust="spacingAndGlyphs" class="lbl" font-size="11.5" >Nazaré</text><text x="1266" y="185.7" textLength="40.0" lengthAdjust="spacingAndGlyphs" class="lbl" font-size="11.5" >da Mata</text><text x="1120.8" y="269.7" textLength="41.5" lengthAdjust="spacingAndGlyphs" class="lbl" font-size="11.5" >Limoeiro</text><text x="1251.5" y="247.1" textLength="36.9" lengthAdjust="spacingAndGlyphs" class="lbl" font-size="11.5" >Carpina</text><text x="1254" y="221.1" textLength="55.0" lengthAdjust="spacingAndGlyphs" class="lbl" font-size="11.5" >Tracunhaém</text><text x="1349.3" y="211.1" textLength="48.5" lengthAdjust="spacingAndGlyphs" class="lbl" font-size="11.5" >Araçoiaba</text><text x="1298.5" y="284.1" textLength="44.8" lengthAdjust="spacingAndGlyphs" class="lbl" font-size="11.5" >Paudalho</text><text x="1218.7" y="297.4" textLength="43.8" lengthAdjust="spacingAndGlyphs" class="lbl" font-size="11.5" >Lagoa de</text><text x="1223.3" y="308.1" textLength="35.1" lengthAdjust="spacingAndGlyphs" class="lbl" font-size="11.5" >Itaenga</text><text x="1154.5" y="318.1" textLength="50.3" lengthAdjust="spacingAndGlyphs" class="lbl" font-size="11.5" >Feira Nova</text><text x="1041" y="337.1" textLength="30.0" lengthAdjust="spacingAndGlyphs" class="lbl" font-size="11.5" >assira</text><text x="1228.4" y="346.1" textLength="28.6" lengthAdjust="spacingAndGlyphs" class="lbl" font-size="11.5" >Glória</text><text x="1221.4" y="357.9" textLength="41.6" lengthAdjust="spacingAndGlyphs" class="lbl" font-size="11.5" >do Goitá</text><text x="1373.8" y="341.1" textLength="65.6" lengthAdjust="spacingAndGlyphs" class="lbl" font-size="11.5" >São Lourenço</text><text x="1386" y="351.9" textLength="39.5" lengthAdjust="spacingAndGlyphs" class="lbl" font-size="11.5" >da Mata</text><text x="1409.3" y="366.6" textLength="57.7" lengthAdjust="spacingAndGlyphs" class="lbl" font-size="11.5" >Camaragibe</text><text x="1167" y="388.8" textLength="24.4" lengthAdjust="spacingAndGlyphs" class="lbl" font-size="11.5" >Apoti</text><text x="1216.8" y="422.1" textLength="46.2" lengthAdjust="spacingAndGlyphs" class="lbl" font-size="11.5" >Vitória de</text><text x="1210.8" y="433.6" textLength="57.7" lengthAdjust="spacingAndGlyphs" class="lbl" font-size="11.5" >Santo Antão</text><text x="1288" y="419.7" textLength="33.6" lengthAdjust="spacingAndGlyphs" class="lbl" font-size="11.5" >Cidade</text><text x="1286" y="430.1" textLength="38.0" lengthAdjust="spacingAndGlyphs" class="lbl" font-size="11.5" >de Deus</text><text x="1350.7" y="429.4" textLength="35.3" lengthAdjust="spacingAndGlyphs" class="lbl" font-size="11.5" >Moreno</text><text x="1107" y="452.5" textLength="49.8" lengthAdjust="spacingAndGlyphs" class="lbl" font-size="11.5" >Russinhas</text><text x="1175.3" y="479.8" textLength="63.2" lengthAdjust="spacingAndGlyphs" class="lbl" font-size="11.5" >Serra Grande</text><text x="1041" y="485.8" textLength="38.0" lengthAdjust="spacingAndGlyphs" class="lbl" font-size="11.5" >Gravatá</text><text x="1267.6" y="493.6" textLength="35.4" lengthAdjust="spacingAndGlyphs" class="lbl" font-size="11.5" >Juçaral</text><text x="1474" y="89.6" textLength="55.0" lengthAdjust="spacingAndGlyphs" class="lbl" font-size="11.5" >Tejucupapo</text><text x="1536.3" y="101.1" textLength="41.6" lengthAdjust="spacingAndGlyphs" class="lbl" font-size="11.5" >Ponta de</text><text x="1541" y="111.8" textLength="32.0" lengthAdjust="spacingAndGlyphs" class="lbl" font-size="11.5" >Pedras</text><text x="1455.5" y="195.8" textLength="44.8" lengthAdjust="spacingAndGlyphs" class="lbl" font-size="11.5" >Pasmado</text><text x="1474" y="247.1" textLength="41.5" lengthAdjust="spacingAndGlyphs" class="lbl" font-size="11.5" >Igarassu</text><text x="1464.7" y="288.6" textLength="62.3" lengthAdjust="spacingAndGlyphs" class="lbl" font-size="11.5" >Abreu e Lima</text><text x="1531.7" y="297.4" textLength="39.3" lengthAdjust="spacingAndGlyphs" class="lbl" font-size="11.5" >Paulista</text><text x="1103.8" y="507.9" textLength="55.2" lengthAdjust="spacingAndGlyphs" class="lbl" font-size="11.5" >Chã Grande</text><text x="1178" y="569.4" textLength="48.8" lengthAdjust="spacingAndGlyphs" class="lbl" font-size="11.5" >Primavera</text><text x="1241" y="555.1" textLength="53.0" lengthAdjust="spacingAndGlyphs" class="lbl" font-size="11.5" >Maçau-açu</text><text x="1041" y="577.4" textLength="20.0" lengthAdjust="spacingAndGlyphs" class="lbl" font-size="11.5" >lirim</text><text x="1117" y="598.7" textLength="36.5" lengthAdjust="spacingAndGlyphs" class="lbl" font-size="11.5" >Amaraji</text><text x="1200.8" y="604.9" textLength="44.9" lengthAdjust="spacingAndGlyphs" class="lbl" font-size="11.5" >Frexeiras</text><text x="1260.8" y="591.6" textLength="36.9" lengthAdjust="spacingAndGlyphs" class="lbl" font-size="11.5" >Escada</text><text x="1189" y="645.1" textLength="35.4" lengthAdjust="spacingAndGlyphs" class="lbl" font-size="11.5" >Aripibu</text><text x="1136" y="658.3" textLength="65.7" lengthAdjust="spacingAndGlyphs" class="lbl" font-size="11.5" >José Mariano</text><text x="1062.2" y="664.9" textLength="31.2" lengthAdjust="spacingAndGlyphs" class="lbl" font-size="11.5" >Cortês</text><text x="1168.6" y="690.9" textLength="39.2" lengthAdjust="spacingAndGlyphs" class="lbl" font-size="11.5" >Ribeirão</text><text x="1241" y="697.1" textLength="45.8" lengthAdjust="spacingAndGlyphs" class="lbl" font-size="11.5" >Ibiratinga</text><text x="1207.8" y="713.6" textLength="23.7" lengthAdjust="spacingAndGlyphs" class="lbl" font-size="11.5" >Brejo</text><text x="1155.8" y="738.1" textLength="49.7" lengthAdjust="spacingAndGlyphs" class="lbl" font-size="11.5" >Gameleira</text><text x="1069.8" y="759.9" textLength="40.2" lengthAdjust="spacingAndGlyphs" class="lbl" font-size="11.5" >Joaquim</text><text x="1071.7" y="770.3" textLength="36.9" lengthAdjust="spacingAndGlyphs" class="lbl" font-size="11.5" >Nabuco</text><text x="1242.4" y="774.1" textLength="30.2" lengthAdjust="spacingAndGlyphs" class="lbl" font-size="11.5" >Cocaú</text><text x="1027.4" y="801.1" textLength="45.6" lengthAdjust="spacingAndGlyphs" class="lbl" font-size="11.5" >Palmares</text><text x="1066" y="820.9" textLength="52.0" lengthAdjust="spacingAndGlyphs" class="lbl" font-size="11.5" >Água Preta</text><text x="1236.2" y="861.1" textLength="23.7" lengthAdjust="spacingAndGlyphs" class="lbl" font-size="11.5" >Saué</text><text x="1375.8" y="616.0" textLength="32.9" lengthAdjust="spacingAndGlyphs" class="lbl" font-size="11.5" >Ipojuca</text><text x="1356" y="677.3" textLength="36.0" lengthAdjust="spacingAndGlyphs" class="lbl" font-size="11.5" >Camela</text><text x="1410" y="680.4" textLength="40.2" lengthAdjust="spacingAndGlyphs" class="lbl" font-size="11.5" >Porto de</text><text x="1408.7" y="690.8" textLength="41.9" lengthAdjust="spacingAndGlyphs" class="lbl" font-size="11.5" >Galinhas</text><text x="1335.3" y="743.5" textLength="47.3" lengthAdjust="spacingAndGlyphs" class="lbl" font-size="11.5" >Sirinhaém</text><text x="1303.7" y="787.7" textLength="60.9" lengthAdjust="spacingAndGlyphs" class="lbl" font-size="11.5" >Rio Formoso</text><text x="1354.6" y="819.1" textLength="44.2" lengthAdjust="spacingAndGlyphs" class="lbl" font-size="11.5" >Praia dos</text><text x="1353.7" y="830.1" textLength="46.0" lengthAdjust="spacingAndGlyphs" class="lbl" font-size="11.5" >Carneiros</text><text x="1345.6" y="847.1" textLength="39.7" lengthAdjust="spacingAndGlyphs" class="lbl" font-size="11.5" >Praia de</text><text x="1338" y="857.5" textLength="55.0" lengthAdjust="spacingAndGlyphs" class="lbl" font-size="11.5" >Tamandaré</text><text x="181" y="731.7" textLength="48.0" lengthAdjust="spacingAndGlyphs" class="lbl" font-size="11.5" >Venturosa</text><text x="641.5" y="734.1" textLength="41.5" lengthAdjust="spacingAndGlyphs" class="lbl" font-size="11.5" >Ibirajuba</text><text x="903.5" y="746.4" textLength="56.5" lengthAdjust="spacingAndGlyphs" class="lbl" font-size="11.5" >Laje Grande</text><text x="795.7" y="753.4" textLength="31.3" lengthAdjust="spacingAndGlyphs" class="lbl" font-size="11.5" >Cupira</text><text x="826" y="779.7" textLength="29.4" lengthAdjust="spacingAndGlyphs" class="lbl" font-size="11.5" >Lagoa</text><text x="816" y="790.4" textLength="48.0" lengthAdjust="spacingAndGlyphs" class="lbl" font-size="11.5" >dos Gatos</text><text x="695.6" y="784.8" textLength="32.9" lengthAdjust="spacingAndGlyphs" class="lbl" font-size="11.5" >Cruzes</text><text x="756.3" y="790.4" textLength="36.9" lengthAdjust="spacingAndGlyphs" class="lbl" font-size="11.5" >Panelas</text><text x="941" y="793.4" textLength="39.3" lengthAdjust="spacingAndGlyphs" class="lbl" font-size="11.5" >Catende</text><text x="442.7" y="819.1" textLength="30.3" lengthAdjust="spacingAndGlyphs" class="lbl" font-size="11.5" >Jucati</text><text x="671.8" y="827.8" textLength="35.4" lengthAdjust="spacingAndGlyphs" class="lbl" font-size="11.5" >Jurema</text><text x="891.8" y="833.9" textLength="40.5" lengthAdjust="spacingAndGlyphs" class="lbl" font-size="11.5" >Jaqueira</text><text x="181.2" y="839.4" textLength="67.2" lengthAdjust="spacingAndGlyphs" class="lbl" font-size="11.5" >Santo Antônio</text><text x="344" y="840.4" textLength="48.0" lengthAdjust="spacingAndGlyphs" class="lbl" font-size="11.5" >Capoeiras</text><text x="538.8" y="842.0" textLength="39.2" lengthAdjust="spacingAndGlyphs" class="lbl" font-size="11.5" >Calçado</text><text x="621.2" y="849.1" textLength="68.3" lengthAdjust="spacingAndGlyphs" class="lbl" font-size="11.5" >Santo Antônio</text><text x="617.7" y="859.7" textLength="74.3" lengthAdjust="spacingAndGlyphs" class="lbl" font-size="11.5" >das Queimadas</text><text x="478" y="850.6" textLength="37.0" lengthAdjust="spacingAndGlyphs" class="lbl" font-size="11.5" >Batinga</text><text x="353" y="864.1" textLength="33.0" lengthAdjust="spacingAndGlyphs" class="lbl" font-size="11.5" >Caetés</text><text x="884" y="869.1" textLength="35.6" lengthAdjust="spacingAndGlyphs" class="lbl" font-size="11.5" >Marajal</text><text x="1515.5" y="183.8" textLength="32.3" lengthAdjust="spacingAndGlyphs" class="lbl" font-size="11.5" font-style="italic">Ilha de</text><text x="1507.2" y="194.9" textLength="47.6" lengthAdjust="spacingAndGlyphs" class="lbl" font-size="11.5" font-style="italic">Itamaracá</text><text x="1517.8" y="346.7" textLength="38.2" lengthAdjust="spacingAndGlyphs" class="lbl" font-size="13" font-weight="bold">Olinda</text><text x="1485.5" y="390.6" textLength="50.8" lengthAdjust="spacingAndGlyphs" class="lbl" font-size="16.5" font-weight="bold">Recife</text><text x="1441.7" y="452.7" textLength="82.1" lengthAdjust="spacingAndGlyphs" class="lbl" font-size="13" font-weight="bold">Jaboatão dos</text><text x="1448.6" y="466.5" textLength="69.2" lengthAdjust="spacingAndGlyphs" class="lbl" font-size="13" font-weight="bold">Guararapes</text><text x="1366" y="534.5" textLength="87.8" lengthAdjust="spacingAndGlyphs" class="lbl" font-size="12.5" font-weight="bold">Cabo de Santo</text><text x="1378" y="547.9" textLength="61.4" lengthAdjust="spacingAndGlyphs" class="lbl" font-size="12.5" font-weight="bold">Agostinho</text><path d="M1241 340 L1251.4 337.6 L1269.2 338.6 L1283 341.5 L1302.8 347.5 L1318.6 351.8 L1338.4 348.4 L1350.3 351.8 L1368 348.4 L1374 353.4 L1382 359.3 L1405.7 361.3 L1411.6 369.2 L1427.4 383 L1437.3 387" fill="none" stroke="#4f63e6" stroke-width="4.5" stroke-linejoin="round" stroke-linecap="round" stroke-opacity="0.75"/><path d="M1241 340 L1249.4 351.4 L1251.4 375.1 L1259.3 383 L1265.3 393 L1265.3 402.8 L1259.3 406.8 L1249.4 408.8" fill="none" stroke="#4f63e6" stroke-width="4.5" stroke-linejoin="round" stroke-linecap="round" stroke-opacity="0.75"/><path d="M1239.5 424.6 L1259.3 421.6 L1279.1 423.6 L1298.9 420.6 L1322.6 415.7 L1338.4 418.6 L1358.2 419.6 L1378 420.6 L1397.7 418.6 L1417.5 420.6 L1425.4 428.5 L1433.3 438.4 L1437.3 454.2 L1447.2 450.3 L1457 442.4" fill="none" stroke="#4f63e6" stroke-width="4.5" stroke-linejoin="round" stroke-linecap="round" stroke-opacity="0.75"/><path d="M1445.2 396.9 L1457 396.9 L1472.9 394.9 L1470.9 402.8 L1463 406.8 L1455.1 410.7 L1447.2 418.6" fill="none" stroke="#4f63e6" stroke-width="4.5" stroke-linejoin="round" stroke-linecap="round" stroke-opacity="0.75"/><path d="M1293.5 166 C1291.0 159 1282.5 152.0 1282.5 144.0 A11.0 11.0 0 0 1 1304.5 144.0 C1304.5 152.0 1296.0 159 1293.5 166Z" fill="#e01019" stroke="rgba(0,0,0,.25)" stroke-width="0.6"/><text x="1293.5" y="147.5" text-anchor="middle" class="pin">1</text><path d="M1280.5 179 C1278.0 172 1269.5 165.0 1269.5 157.0 A11.0 11.0 0 0 1 1291.5 157.0 C1291.5 165.0 1283.0 172 1280.5 179Z" fill="#d4ea2c" stroke="rgba(0,0,0,.25)" stroke-width="0.6"/><text x="1280.5" y="160.5" text-anchor="middle" class="pin">1</text><path d="M1226 245 C1223.5 238 1215.0 231.0 1215.0 223.0 A11.0 11.0 0 0 1 1237.0 223.0 C1237.0 231.0 1228.5 238 1226 245Z" fill="#e01019" stroke="rgba(0,0,0,.25)" stroke-width="0.6"/><text x="1226" y="226.5" text-anchor="middle" class="pin">1</text><path d="M1263 246 C1260.5 239 1252.0 232.0 1252.0 224.0 A11.0 11.0 0 0 1 1274.0 224.0 C1274.0 232.0 1265.5 239 1263 246Z" fill="#e01019" stroke="rgba(0,0,0,.25)" stroke-width="0.6"/><path d="M1259 245 C1256.5 238 1248.0 231.0 1248.0 223.0 A11.0 11.0 0 0 1 1270.0 223.0 C1270.0 231.0 1261.5 238 1259 245Z" fill="#3ebde9" stroke="rgba(0,0,0,.25)" stroke-width="0.6"/><text x="1259" y="226.5" text-anchor="middle" class="pin">4</text><path d="M1180 311 C1177.5 304 1169.0 299.0 1169.0 291.0 A11.0 11.0 0 0 1 1191.0 291.0 C1191.0 299.0 1182.5 304 1180 311Z" fill="#121412" stroke="rgba(0,0,0,.25)" stroke-width="0.6"/><text x="1180" y="294.5" text-anchor="middle" class="pin">2</text><path d="M1241 347 C1238.5 340 1230.0 333.0 1230.0 325.0 A11.0 11.0 0 0 1 1252.0 325.0 C1252.0 333.0 1243.5 340 1241 347Z" fill="#1b22b8" stroke="rgba(0,0,0,.25)" stroke-width="0.6"/><text x="1241" y="328.5" text-anchor="middle" class="pin">20</text><path d="M1318.7 397 C1316.2 390 1307.7 383.0 1307.7 375.0 A11.0 11.0 0 0 1 1329.7 375.0 C1329.7 383.0 1321.2 390 1318.7 397Z" fill="#e01019" stroke="rgba(0,0,0,.25)" stroke-width="0.6"/><text x="1318.7" y="378.5" text-anchor="middle" class="pin">2</text><path d="M1232 421 C1229.5 414 1221.0 407.0 1221.0 399.0 A11.0 11.0 0 0 1 1243.0 399.0 C1243.0 407.0 1234.5 414 1232 421Z" fill="#1b22b8" stroke="rgba(0,0,0,.25)" stroke-width="0.6"/><path d="M1246 422 C1243.5 415 1235.0 408.0 1235.0 400.0 A11.0 11.0 0 0 1 1257.0 400.0 C1257.0 408.0 1248.5 415 1246 422Z" fill="#1b22b8" stroke="rgba(0,0,0,.25)" stroke-width="0.6"/><path d="M1237 428 C1234.5 421 1226.0 414.0 1226.0 406.0 A11.0 11.0 0 0 1 1248.0 406.0 C1248.0 414.0 1239.5 421 1237 428Z" fill="#1b22b8" stroke="rgba(0,0,0,.25)" stroke-width="0.6"/><path d="M1245 428 C1242.5 421 1234.0 414.0 1234.0 406.0 A11.0 11.0 0 0 1 1256.0 406.0 C1256.0 414.0 1247.5 421 1245 428Z" fill="#1b22b8" stroke="rgba(0,0,0,.25)" stroke-width="0.6"/><path d="M1241 422 C1238.5 415 1230.0 408.0 1230.0 400.0 A11.0 11.0 0 0 1 1252.0 400.0 C1252.0 408.0 1243.5 415 1241 422Z" fill="#1b22b8" stroke="rgba(0,0,0,.25)" stroke-width="0.6"/><text x="1241" y="403.5" text-anchor="middle" class="pin">14</text><path d="M1373 424 C1370.5 417 1362.0 410.0 1362.0 402.0 A11.0 11.0 0 0 1 1384.0 402.0 C1384.0 410.0 1375.5 417 1373 424Z" fill="#1b22b8" stroke="rgba(0,0,0,.25)" stroke-width="0.6"/><text x="1373" y="405.5" text-anchor="middle" class="pin">1</text><path d="M1363 424 C1360.5 417 1352.0 410.0 1352.0 402.0 A11.0 11.0 0 0 1 1374.0 402.0 C1374.0 410.0 1365.5 417 1363 424Z" fill="#1b22b8" stroke="rgba(0,0,0,.25)" stroke-width="0.6"/><text x="1363" y="405.5" text-anchor="middle" class="pin">10</text><path d="M1418.5 424 C1416.0 417 1407.5 410.0 1407.5 402.0 A11.0 11.0 0 0 1 1429.5 402.0 C1429.5 410.0 1421.0 417 1418.5 424Z" fill="#1b22b8" stroke="rgba(0,0,0,.25)" stroke-width="0.6"/><text x="1418.5" y="405.5" text-anchor="middle" class="pin">4</text><path d="M1436 415 C1433.5 408 1425.0 401.0 1425.0 393.0 A11.0 11.0 0 0 1 1447.0 393.0 C1447.0 401.0 1438.5 408 1436 415Z" fill="#1b22b8" stroke="rgba(0,0,0,.25)" stroke-width="0.6"/><text x="1436" y="396.5" text-anchor="middle" class="pin">1</text><path d="M1430 434 C1427.5 427 1419.0 420.0 1419.0 412.0 A11.0 11.0 0 0 1 1441.0 412.0 C1441.0 420.0 1432.5 427 1430 434Z" fill="#1b22b8" stroke="rgba(0,0,0,.25)" stroke-width="0.6"/><text x="1430" y="415.5" text-anchor="middle" class="pin">2</text><path d="M1453 442 C1450.5 435 1442.0 428.0 1442.0 420.0 A11.0 11.0 0 0 1 1464.0 420.0 C1464.0 428.0 1455.5 435 1453 442Z" fill="#1b22b8" stroke="rgba(0,0,0,.25)" stroke-width="0.6"/><text x="1453" y="423.5" text-anchor="middle" class="pin">7</text><path d="M1476 450 C1473.5 443 1465.0 436.0 1465.0 428.0 A11.0 11.0 0 0 1 1487.0 428.0 C1487.0 436.0 1478.5 443 1476 450Z" fill="#1b22b8" stroke="rgba(0,0,0,.25)" stroke-width="0.6"/><text x="1476" y="431.5" text-anchor="middle" class="pin">8</text><path d="M1433 462 C1430.5 455 1422.0 448.0 1422.0 440.0 A11.0 11.0 0 0 1 1444.0 440.0 C1444.0 448.0 1435.5 455 1433 462Z" fill="#1b22b8" stroke="rgba(0,0,0,.25)" stroke-width="0.6"/><text x="1433" y="443.5" text-anchor="middle" class="pin">6</text><path d="M1058 483 C1055.5 476 1047.0 469.0 1047.0 461.0 A11.0 11.0 0 0 1 1069.0 461.0 C1069.0 469.0 1060.5 476 1058 483Z" fill="#e01019" stroke="rgba(0,0,0,.25)" stroke-width="0.6"/><path d="M1055 488 C1052.5 481 1044.0 474.0 1044.0 466.0 A11.0 11.0 0 0 1 1066.0 466.0 C1066.0 474.0 1057.5 481 1055 488Z" fill="#e01019" stroke="rgba(0,0,0,.25)" stroke-width="0.6"/><text x="1055" y="469.5" text-anchor="middle" class="pin">1</text><path d="M1134 502 C1131.5 495 1123.0 492.0 1123.0 484.0 A11.0 11.0 0 0 1 1145.0 484.0 C1145.0 492.0 1136.5 495 1134 502Z" fill="#e01019" stroke="rgba(0,0,0,.25)" stroke-width="0.6"/><text x="1134" y="487.5" text-anchor="middle" class="pin">1</text><path d="M776 793 C773.5 786 765.0 779.0 765.0 771.0 A11.0 11.0 0 0 1 787.0 771.0 C787.0 779.0 778.5 786 776 793Z" fill="#4e7e2e" stroke="rgba(0,0,0,.25)" stroke-width="0.6"/><path d="M773 790 C770.5 783 762.0 776.0 762.0 768.0 A11.0 11.0 0 0 1 784.0 768.0 C784.0 776.0 775.5 783 773 790Z" fill="#3ebde9" stroke="rgba(0,0,0,.25)" stroke-width="0.6"/><text x="773" y="771.5" text-anchor="middle" class="pin">1</text><path d="M496 845 C493.5 838 485.0 833.0 485.0 825.0 A11.0 11.0 0 0 1 507.0 825.0 C507.0 833.0 498.5 838 496 845Z" fill="#3ebde9" stroke="rgba(0,0,0,.25)" stroke-width="0.6"/><text x="496" y="828.5" text-anchor="middle" class="pin">2</text><path d="M1472.5 394 L1466 384 L1479 384z" fill="#6b9a35"/><circle cx="1472.5" cy="377" r="11" fill="#6b9a35"/><circle cx="1472.5" cy="377" r="7.5" fill="#fff"/><path d="M1467.5 378 L1472.5 373 L1477.5 378 V382 H1467.5z" fill="#2f5a1e"/></svg>
</div>
<div class="a" style="left:81px;top:92px;width:32px;height:38px;background:#fdfdfd"></div>
<svg style="left:88px;top:101px" width="18" height="18"><circle cx="7.5" cy="7.5" r="4.3" stroke="#555" stroke-width="1.5" fill="none"/><path d="M10.5 10.5 L14 14" stroke="#555" stroke-width="1.8"/></svg>
<div class="a" style="left:79px;top:265px;width:962px;height:463px;background:#fcfcfd;box-shadow:0 1px 3px rgba(0,0,0,.25)"></div>
<div class="a" style="left:81px;top:496px;width:16px;height:27px;background:#2a3c98"></div>
<svg style="left:81px;top:496px" width="16" height="27"><path d="M10 10 L6.5 13.5 L10 17" stroke="#fff" stroke-width="2" fill="none"/></svg>
<div class="t" style="left:141px;top:278px;font-size:13px;color:#555;-webkit-text-stroke:0.3px #555">Pré-Cargas</div>
<div class="t" style="left:269px;top:278px;font-size:13px;color:#555;-webkit-text-stroke:0.3px #555;letter-spacing:0.1px">Carregamentos Gravados</div>
<div class="a" style="left:103px;top:308px;width:917px;height:1px;background:#d8d8de"></div>
<div class="a" style="left:103px;top:306px;width:144px;height:3px;background:#2a3d9a"></div>
<svg style="left:842px;top:276px" width="26" height="16"><rect x="1" y="1.5" width="17" height="10" rx="1.5" stroke="#555" stroke-width="1.2" fill="#eee"/><path d="M4 5h2M8 5h2M12 5h2" stroke="#333" stroke-width="1.5"/><rect x="16" y="6" width="7" height="8" fill="#9ab" stroke="#567" stroke-width="1"/></svg>
<div class="t" style="left:867px;top:278px;font-size:10px;color:#255f95;letter-spacing:-0.15px">Compartilhe sua opinião</div>
<svg style="left:976px;top:276px" width="20" height="16"><circle cx="7" cy="8.5" r="3.6" stroke="#222" stroke-width="3.2" fill="none"/><circle cx="7" cy="8.5" r="5.6" stroke="#222" stroke-width="1.6" stroke-dasharray="1.6 1.3" fill="none"/><circle cx="14.5" cy="4" r="2.3" stroke="#222" stroke-width="2" fill="none"/><circle cx="14.5" cy="12.5" r="2.3" stroke="#222" stroke-width="2" fill="none"/></svg>
<svg style="left:1001px;top:277px" width="13" height="13"><rect x="0" y="0" width="5" height="7" fill="#222"/><rect x="7" y="0" width="5" height="4" fill="#222"/><rect x="0" y="9" width="5" height="3" fill="#222"/><rect x="7" y="6" width="5" height="6" fill="#222"/></svg>
<div class="a" style="left:1024px;top:277px;width:12px;height:12px;border:1.5px solid #333;border-radius:1px"></div>
<div class="t" style="left:203px;top:326px;font-size:11px;color:#666;-webkit-text-stroke:0.35px #666">Ações</div>
<div class="t" style="left:311px;top:326px;font-size:11px;color:#666;-webkit-text-stroke:0.35px #666">Destino</div>
<div class="t" style="left:385px;top:326px;font-size:11px;color:#666;-webkit-text-stroke:0.35px #666">Situação</div>
<div class="t" style="left:449px;top:326px;font-size:11px;color:#666;-webkit-text-stroke:0.35px #666">COR</div>
<div class="t" style="left:576px;top:326px;font-size:11px;color:#666;-webkit-text-stroke:0.35px #666">Veículo</div>
<div class="t" style="left:720px;top:326px;font-size:11px;color:#666;-webkit-text-stroke:0.35px #666">Veículo com Restrição</div>
<div class="t" style="left:903px;top:326px;font-size:11px;color:#666;-webkit-text-stroke:0.35px #666">Motorista</div>
<svg style="left:354px;top:329px" width="9" height="9"><path d="M1 1.5 h7 l-2.8 3.2 v3.5 l-1.4 -0.8 v-2.7z" stroke="#777" stroke-width="1" fill="none"/></svg>
<svg style="left:619px;top:329px" width="9" height="9"><path d="M1 1.5 h7 l-2.8 3.2 v3.5 l-1.4 -0.8 v-2.7z" stroke="#777" stroke-width="1" fill="none"/></svg>
<svg style="left:957px;top:329px" width="9" height="9"><path d="M1 1.5 h7 l-2.8 3.2 v3.5 l-1.4 -0.8 v-2.7z" stroke="#777" stroke-width="1" fill="none"/></svg>
<div class="a" style="left:124px;top:327px;width:15px;height:14px;border:1.3px solid #444;border-radius:2px"></div>
<div class="a" style="left:103px;top:359px;width:917px;height:38px;background:#d9d9de"></div>
<div class="a" style="left:124px;top:370px;width:15px;height:15px;border:1.3px solid #555;border-radius:2px;background:#e4e4e8"></div>
<svg style="left:152px;top:370px" width="24" height="14"><path d="M1 7 Q12 -3 23 7 Q12 17 1 7z" fill="#1a1a1a"/><circle cx="12" cy="7" r="3.8" fill="#fff"/><circle cx="12" cy="7" r="2.4" fill="#1a1a1a"/></svg>
<svg style="left:193px;top:369px" width="16" height="16"><path d="M7 4.5 h-5.5 v10 h10 v-6" stroke="#222" stroke-width="1.3" fill="#e6f4fb"/><path d="M6 11 l0.6 -2.4 l6.2 -6.6 l1.8 1.8 l-6.4 6.4z" stroke="#222" stroke-width="1.2" fill="#555"/></svg>
<svg style="left:229px;top:371px" width="15" height="13"><rect x="1.2" y="1.2" width="12" height="10" stroke="#3a2a2a" stroke-width="1.2" fill="none"/><path d="M1 3.6h12.5" stroke="#3a2a2a" stroke-width="1.1"/><path d="M5.5 5.8h3.5" stroke="#3a2a2a" stroke-width="1.1"/></svg>
<svg style="left:263px;top:371px" width="18" height="13"><path d="M1.5 11.5 L4.5 1.5 H13.5 L16.5 11.5z" stroke="#222" stroke-width="1.2" fill="#f4f4f8"/><path d="M9 3v2M9 6.5v2M9 10v1.5" stroke="#222" stroke-width="1.6"/></svg>
<div class="t" style="left:297px;top:371px;font-size:11px;color:#1c1c1c;-webkit-text-stroke:0.25px #1c1c1c;letter-spacing:-0.2px">NORDESTE</div>
<svg style="left:401px;top:370px" width="14" height="14"><path d="M1 2 l4 -1 l4 1.5 l4 -1.5 v11 l-4 1.5 l-4 -1.5 l-4 1.5z" fill="#1a1a1a"/><path d="M5 1v11M9 2.5v11" stroke="#777" stroke-width="0.8"/></svg>
<svg style="left:454px;top:369px" width="12" height="15"><path d="M6 14 C2 8 1 6.5 1 5 a5 5 0 0 1 10 0 C11 6.5 10 8 6 14z" fill="#1a2ad0"/><circle cx="6" cy="5" r="1.8" fill="#fff"/></svg>
<div class="t" style="left:491px;top:371px;font-size:11px;color:#1c1c1c;-webkit-text-stroke:0.25px #1c1c1c;letter-spacing:-0.42px">(DELLEON) 13 QFB2874 ACCELO 815 M.BENZ</div>
<div class="a" style="left:841px;top:359px;width:179px;height:38px;overflow:hidden"><div class="t" style="left:0;top:12px;font-size:11px;color:#1c1c1c;-webkit-text-stroke:0.25px #1c1c1c;letter-spacing:-0.35px">CICERO DELLEON PAZ DE ANDRADE</div></div>
<div class="a" style="left:156px;top:408px;width:89px;height:29px;background:#737373;border-radius:3px"></div>
<div class="t" style="left:163px;top:415px;font-size:12px;font-weight:bold;color:#fff;letter-spacing:0.35px">Editar Carga</div>
<svg style="left:196px;top:388px" width="20" height="24"><path d="M6 2 q2 -1.5 3 0 v7 q1.5 -1 3 0 q1.5 -1 3 0.5 q1.5 -0.5 2.5 1 v6 q0 4 -4 6 h-4 q-3 -1 -5 -5 l-3 -4 q0 -2 2 -1.5 l2 2z" fill="#fff" stroke="#111" stroke-width="1.1"/></svg>
<svg style="left:105px;top:661px" width="10" height="12"><path d="M8 1 v10 l-7 -5z" fill="#888"/></svg>
<div class="a" style="left:121px;top:663px;width:309px;height:8px;border-radius:4px;background:#888"></div>
<svg style="left:1007px;top:661px" width="10" height="12"><path d="M2 1 v10 l7 -5z" fill="#888"/></svg>
<div class="t" style="left:103px;top:691px;font-size:12.5px;font-weight:bold;color:#1c1c1c">Pré-cargas (0) / Pedidos (0)</div>
<div class="a" style="left:867px;top:684px;width:58px;height:31px;background:#fdfdfd;border-radius:3px;box-shadow:0 1px 2px rgba(0,0,0,.3)"></div>
<svg style="left:886px;top:690px" width="20" height="16"><path d="M1 8 Q10 -1 19 8 Q10 17 1 8z" fill="#1a1a1a"/><circle cx="10" cy="8" r="3.4" fill="#fff"/><circle cx="10" cy="8" r="2.2" fill="#1a1a1a"/></svg>
<div class="a" style="left:934px;top:684px;width:82px;height:31px;background:#fdfdfd;border-radius:3px;box-shadow:0 1px 2px rgba(0,0,0,.3)"></div>
<div class="t" style="left:949px;top:690px;font-size:13px;font-weight:bold;color:#222">Ações</div>
<svg style="left:988px;top:691px" width="12" height="9"><path d="M1 7 L6 2 L11 7" stroke="#333" stroke-width="1.4" fill="none"/></svg>
<svg style="left:1030px;top:717px" width="10" height="10"><path d="M9 2 L2 9 M9 6 L6 9" stroke="#888" stroke-width="1"/></svg>
<div class="a" style="left:80px;top:737px;width:523px;height:61px;background:#fcfcfd;border-radius:3px;box-shadow:0 1px 3px rgba(0,0,0,.2)"></div>
<div class="a" style="left:81px;top:757px;width:16px;height:26px;background:#2a3c98"></div>
<svg style="left:81px;top:757px" width="16" height="26"><path d="M10 9.5 L6.5 13 L10 16.5" stroke="#fff" stroke-width="2" fill="none"/></svg>
<div class="t" style="left:102px;top:771px;width:74px;text-align:center;font-size:12.5px;font-weight:bold;color:#5b8a2e">167234.2 Kg</div>
<div class="a" style="left:102px;top:788px;width:74px;height:1px;border-top:1px dotted #dde"></div>
<div class="t" style="left:197px;top:771px;width:29px;text-align:center;font-size:12.5px;font-weight:bold;color:#5b8a2e">0&nbsp; M³</div>
<div class="a" style="left:197px;top:788px;width:29px;height:1px;border-top:1px dotted #dde"></div>
<div class="t" style="left:246px;top:771px;width:22px;text-align:center;font-size:12.5px;font-weight:bold;color:#5b8a2e">797</div>
<div class="a" style="left:246px;top:788px;width:22px;height:1px;border-top:1px dotted #dde"></div>
<div class="t" style="left:289px;top:771px;width:21px;text-align:center;font-size:12.5px;font-weight:bold;color:#5b8a2e">631</div>
<div class="a" style="left:289px;top:788px;width:21px;height:1px;border-top:1px dotted #dde"></div>
<div class="t" style="left:331px;top:771px;width:27px;text-align:center;font-size:12.5px;font-weight:bold;color:#5b8a2e">1075</div>
<div class="a" style="left:331px;top:788px;width:27px;height:1px;border-top:1px dotted #dde"></div>
<div class="t" style="left:378px;top:771px;width:82px;text-align:center;font-size:12.5px;font-weight:bold;color:#5b8a2e">R$ 713.220,56</div>
<div class="a" style="left:378px;top:788px;width:82px;height:1px;border-top:1px dotted #dde"></div>
<div class="t" style="left:480px;top:771px;width:44px;text-align:center;font-size:12.5px;font-weight:bold;color:#5b8a2e">R$ 0,00</div>
<div class="a" style="left:480px;top:788px;width:44px;height:1px;border-top:1px dotted #dde"></div>
<div class="t" style="left:545px;top:771px;width:40px;text-align:center;font-size:12.5px;font-weight:bold;color:#5b8a2e">0.00%</div>
<div class="a" style="left:545px;top:788px;width:40px;height:1px;border-top:1px dotted #dde"></div>
<svg style="left:80px;top:740px" width="523" height="30">
<g stroke="#777" fill="none" stroke-width="1">
<path d="M48.5 26 L52.5 11 H64 L68 26z" stroke="#666" stroke-width="1.1"/><circle cx="58" cy="8.5" r="2.2" stroke="#666"/><text x="52.5" y="22" font-size="8" fill="#444" stroke="none" font-family="Liberation Sans">Kg</text>
</g><path d="M130 6.5 L136 9.7 L130 12.9 L124 9.7Z" fill="#f4f4f4" stroke="#333" stroke-width="0.9"/><path d="M124 9.7 L130 12.9 L130 19.5 L124 16.3Z" fill="#fff" stroke="#333" stroke-width="0.9"/><path d="M130 12.9 L136 9.7 L136 16.3 L130 19.5Z" fill="#555" stroke="#333" stroke-width="0.9"/><path d="M124.5 15 L130.5 18.2 L124.5 21.4 L118.5 18.2Z" fill="#f4f4f4" stroke="#333" stroke-width="0.9"/><path d="M118.5 18.2 L124.5 21.4 L124.5 28 L118.5 24.8Z" fill="#fff" stroke="#333" stroke-width="0.9"/><path d="M124.5 21.4 L130.5 18.2 L130.5 24.8 L124.5 28Z" fill="#555" stroke="#333" stroke-width="0.9"/><path d="M136.5 15 L142.5 18.2 L136.5 21.4 L130.5 18.2Z" fill="#f4f4f4" stroke="#333" stroke-width="0.9"/><path d="M130.5 18.2 L136.5 21.4 L136.5 28 L130.5 24.8Z" fill="#fff" stroke="#333" stroke-width="0.9"/><path d="M136.5 21.4 L142.5 18.2 L142.5 24.8 L136.5 28Z" fill="#555" stroke="#333" stroke-width="0.9"/><g stroke="#777" fill="none" stroke-width="1">
<rect x="168" y="8" width="18" height="18" rx="2"/><path d="M174 8 v6 h6 v-6 M170 22 h4 M180 20 v3"/>
<rect x="211" y="10" width="13" height="12" stroke="#bbb"/><path d="M224 14 h4 l3 4 v4 h-7" stroke="#bbb"/><circle cx="215" cy="24" r="2" stroke="#bbb"/><circle cx="228" cy="24" r="2" stroke="#bbb"/>
<rect x="254" y="16" width="10" height="10"/><rect x="264" y="16" width="10" height="10"/><rect x="259" y="6" width="10" height="10"/>
<rect x="328" y="8" width="22" height="14"/><circle cx="339" cy="15" r="3"/><path d="M328 25 q11 -4 22 0"/>
<circle cx="422" cy="17" r="9"/><circle cx="422" cy="17" r="6"/><text x="419" y="20" font-size="8" fill="#777" stroke="none">$</text>
<circle cx="485" cy="17" r="9"/><circle cx="485" cy="17" r="6"/><text x="482" y="20" font-size="8" fill="#777" stroke="none">$</text>
</g></svg>
<div class="a" style="left:952px;top:840px;width:86px;height:22px;background:#fbfbfd"></div>
<div class="a" style="left:1043px;top:840px;width:18px;height:22px;background:#f6f6fa"></div>
<svg style="left:940px;top:830px" width="130" height="40">
<path d="M19.5 27.5 L16.8 22.5 q-0.8 -1.6 0.6 -2 q1.2 -0.3 2 1.2 V17.5 q0 -1.6 1.4 -1.6 q1.4 0 1.4 1.6 V15.8 q0 -1.6 1.4 -1.6 q1.4 0 1.4 1.6 v0.8 q0 -1.5 1.3 -1.5 q1.3 0 1.3 1.5 v1.2 q0 -1.3 1.2 -1.3 q1.2 0 1.2 1.4 v4.5 q0 2.5 -1.5 4.6" stroke="#222" stroke-width="1.2" fill="#fff" stroke-linecap="round"/>
<path d="M38 18 l3 -2 l8 8 l5 -4 l-1 6 l-6 4 z" fill="#aaa" stroke="#888" stroke-width="0.8"/>
<circle cx="65.5" cy="21" r="5.3" fill="#b0b0b0" stroke="#777" stroke-width="0.9"/>
<rect x="82" y="15" width="10" height="11" fill="#b0b0b0" stroke="#777" stroke-width="0.9"/>
<path d="M105 26 l13 -8 l2 3.5 l-13 8z" fill="#666"/><path d="M108 25 l-1 -1.5 M111 23 l-1 -1.5 M114 21 l-1 -1.5 M117 19 l-1 -1.5" stroke="#ddd" stroke-width="0.8"/>
<path d="M62.5 18v6M65.5 16v10M68.5 18v6M86 16v9M89 16v9" stroke="#d8d8e0" stroke-width="0.6"/>
</svg>
<div class="t" style="left:81px;top:850px;font-size:11px;color:#555">Amaris</div>
<div class="t" style="left:90px;top:844px;font-size:16.5px;letter-spacing:-0.4px"><span style="color:#4285f4">G</span><span style="color:#ea4335">o</span><span style="color:#fbbc05">o</span><span style="color:#4285f4">g</span><span style="color:#34a853">l</span><span style="color:#ea4335">e</span></div>
<div class="a" style="left:1525px;top:853px;width:382px;height:13px;background:rgba(245,245,245,.75)"></div>
<div class="t" style="left:1532px;top:854px;font-size:9.5px;color:#333">Atalhos do teclado <span style="color:#ccc">|</span> Dados cartográficos ©2025 Google <span style="color:#ccc">|</span> Termos <span style="color:#ccc">|</span> Informar erro no mapa</div>
<div class="a" style="left:1864px;top:606px;width:36px;height:36px;border-radius:50%;background:#2f4b9c;box-shadow:0 2px 4px rgba(0,0,0,.3)"></div>
<div class="a" style="left:1864px;top:656px;width:36px;height:36px;border-radius:50%;background:#2f4b9c;box-shadow:0 2px 4px rgba(0,0,0,.3)"></div>
<div class="a" style="left:1864px;top:706px;width:36px;height:36px;border-radius:50%;background:#2f4b9c;box-shadow:0 2px 4px rgba(0,0,0,.3)"></div>
<div class="a" style="left:1864px;top:756px;width:36px;height:36px;border-radius:50%;background:#2f4b9c;box-shadow:0 2px 4px rgba(0,0,0,.3)"></div>
<div class="a" style="left:1864px;top:806px;width:36px;height:36px;border-radius:50%;background:#2f4b9c;box-shadow:0 2px 4px rgba(0,0,0,.3)"></div>
<svg style="left:1864px;top:600px" width="40" height="240">
<path d="M18 31 C12 25 11 22 11 19 a7 7 0 0 1 14 0 C25 22 24 25 18 31z" stroke="#fff" stroke-width="1.4" fill="none"/><path d="M18 15 v5" stroke="#fff" stroke-width="1.6"/><circle cx="18" cy="22.5" r="0.9" fill="#fff"/>
<path d="M10 68 h16 M10 81 h16 M10 68 v13 M26 68 v13" stroke="#fff" stroke-width="1" stroke-dasharray="2 1"/><rect x="19" y="67" width="8" height="5" fill="#fff"/>
<path d="M11 116 h14 v9 h-10 l-4 3z" fill="#fff"/><path d="M14 119h8M14 122h8" stroke="#2f4b9c" stroke-width="1"/>
<path d="M11 169h14M11 174h14M11 179h14" stroke="#fff" stroke-width="2"/>
<path d="M11 219h14M13.5 223h9M16 227h4" stroke="#fff" stroke-width="1.8"/>
</svg>
<div class="a" style="left:1890px;top:596px;width:19px;height:19px;border-radius:50%;background:#e2175c;color:#fff;font-size:11px;font-weight:bold;text-align:center;line-height:19px">9</div>
<div class="a" style="left:1890px;top:746px;width:19px;height:19px;border-radius:50%;background:#e2175c;color:#fff;font-size:11px;font-weight:bold;text-align:center;line-height:19px">0</div>
<div class="a" style="left:1787px;top:850px;width:50px;height:50px;border-radius:50%;background:#2f4b9c;box-shadow:0 2px 5px rgba(0,0,0,.3)"></div>
<div class="a" style="left:1857px;top:850px;width:50px;height:50px;border-radius:50%;background:#2f4b9c;box-shadow:0 2px 5px rgba(0,0,0,.3)"></div>
<svg style="left:1787px;top:850px" width="120" height="50">
<circle cx="19" cy="21" r="4" stroke="#fff" stroke-width="1.8" fill="none"/><path d="M12 32 q0 -7 7 -7 q7 0 7 7" stroke="#fff" stroke-width="1.8" fill="none"/>
<circle cx="31" cy="21" r="4" stroke="#fff" stroke-width="1.8" fill="none"/><path d="M24 32 q0 -7 7 -7 q7 0 7 7" stroke="#fff" stroke-width="1.8" fill="none"/>
<path d="M89 22 l6 5 l6 -5" stroke="#fff" stroke-width="2.2" fill="none"/>
</svg>
<svg style="left:804px;top:880px" width="46" height="17"><path d="M2.5 15 V3 L11 10.5 L19.5 3 V15" stroke="#222" stroke-width="3.2" fill="none" stroke-linejoin="miter"/><path d="M24.5 2v7" stroke="#4caf50" stroke-width="2"/><path d="M31 2v7" stroke="#5a5ad0" stroke-width="2"/><path d="M40.5 2v7" stroke="#e91e8c" stroke-width="2"/></svg>
<div class="t" style="left:851px;top:882px;font-size:10.4px;color:#a8a8a8">Copyright © 2008-2025. Máxima Sistemas. Todos os direitos reservados.</div>
</body></html>
